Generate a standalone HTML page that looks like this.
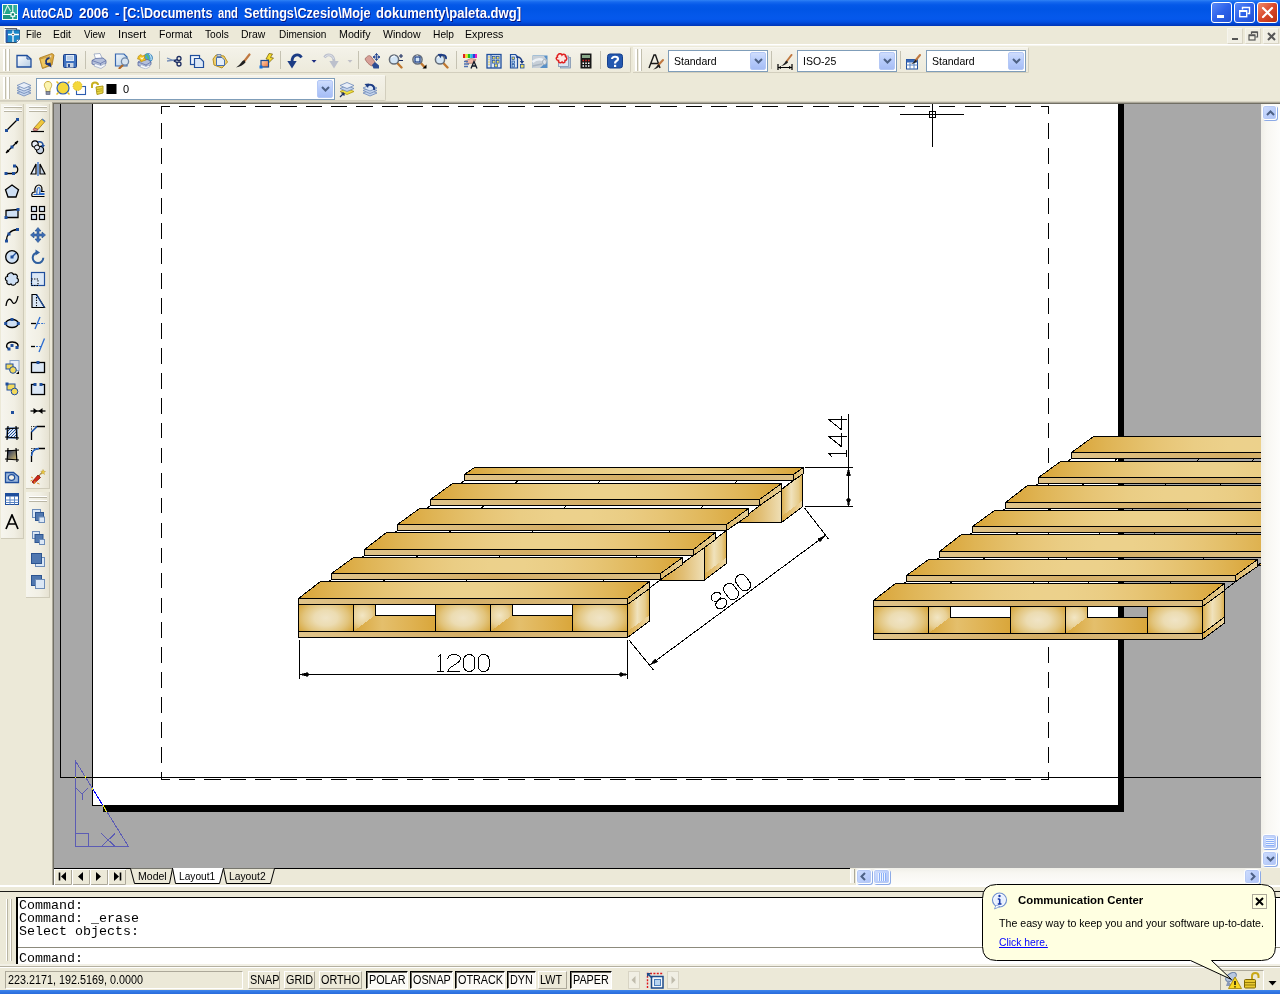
<!DOCTYPE html>
<html><head><meta charset="utf-8"><title>AutoCAD 2006</title>
<style>
*{box-sizing:border-box;margin:0;padding:0}
html,body{width:1280px;height:994px;overflow:hidden;background:#ece9d8;font-family:"Liberation Sans",sans-serif;font-size:11px;color:#000}
.abs{position:absolute}
#titlebar{position:absolute;left:0;top:0;width:1280px;height:26px;background:linear-gradient(to bottom,#2f82f5 0px,#1568ee 2px,#0458e8 5px,#0055e5 9px,#0458ea 15px,#0558ec 19px,#024fe0 22px,#0042cc 24px,#0035b5 26px)}
#titletext{position:absolute;left:22px;top:5px;color:#fff;font-weight:bold;font-size:14px;white-space:nowrap;letter-spacing:0px;text-shadow:1px 1px 0 #0a1883;transform-origin:0 0}
.capbtn{position:absolute;top:2px;width:21px;height:21px;border:1px solid #fff;border-radius:3px;background:linear-gradient(135deg,#5a8af8 0%,#2e62ea 50%,#2050d4 100%)}
.capbtn.close{background:linear-gradient(135deg,#ee8a6a 0%,#d9482a 50%,#b9300f 100%)}
#menubar{position:absolute;left:0;top:26px;width:1280px;height:19px;background:#ece9d8}
.mi{position:absolute;top:2px;font-size:11px;white-space:nowrap;transform-origin:0 0}
.mdibtn{position:absolute;top:28px;width:16px;height:16px;background:#f1efe4;border:1px solid #f6f5ee;border-right-color:#d8d4c4;border-bottom-color:#d8d4c4}
.tb{position:absolute;background:linear-gradient(to bottom,#f4f2e9 0%,#f0eee2 50%,#edeadb 100%);border-bottom:1px solid #d2cebd;border-right:1px solid #d2cebd;border-top:1px solid #f8f7f1;border-radius:0 2px 2px 0}
.grip{position:absolute;width:3px;background:#fff;border-right:1px solid #c2bfae}
.sep{position:absolute;width:1px;background:#c5c2b2}
.combo{position:absolute;height:22px;background:#fff;border:1px solid #7f9db9}
.combo span{position:absolute;left:5px;top:3.5px;font-size:11px;transform-origin:0 0;transform:scaleX(0.955)}
.cbtn{position:absolute;right:1px;top:1px;width:16px;height:18px;border-radius:2px;background:linear-gradient(to bottom,#cfddfd 0%,#b6cbfb 50%,#a6bdf5 100%);border:1px solid #b4c8f6}
.cbtn svg{position:absolute;left:3px;top:5px}
.ic{position:absolute}
.sbtn{position:absolute;width:16px;height:15px;border:1px solid #fff;border-radius:3px;background:linear-gradient(135deg,#cfddfd 0%,#bdd0fb 50%,#aec2f6 100%);box-shadow:inset 0 0 0 1px #b7caf5,1px 1px 0 #8caae6}
.sbtn svg{position:absolute;left:2.5px;top:3.5px}
.sunk{position:absolute;top:971px;height:18px;border:1px solid #aca899;border-right-color:#fff;border-bottom-color:#fff}
.sunk span,.sb span{position:absolute;top:1px;font-size:12px;white-space:nowrap;transform-origin:0 0;transform:scaleX(0.9)}
.sb{position:absolute;top:971px;height:18px}
.sb span{left:0.5px}
.sb.dn span{left:2px}
.sb.up{border:1px solid #fff;border-right-color:#aca899;border-bottom-color:#aca899}
.sb.dn{border:1px solid #000;border-right-color:#fff;border-bottom-color:#fff;background:#fbfaf6;box-shadow:inset 1px 1px 0 #6c6a60}
</style></head><body><div id="root" style="position:absolute;left:0;top:0;width:1280px;height:994px;will-change:transform">
<div id="titlebar">
<svg class="abs" style="left:2px;top:4px" width="16" height="16" viewBox="0 0 16 16"><rect x="0" y="0" width="16" height="16" fill="#f4fbf8"/><rect x="1" y="1" width="14" height="14" fill="#22a48c"/><rect x="1" y="11" width="9" height="4" fill="#1c9480"/><path d="M2 9.500L5.500 1.500L8.500 7" stroke="#d8f0e8" stroke-width="1.100" fill="none"/><path d="M1 10.500H15M10.800 1V15" stroke="#fff" stroke-width="1.100"/><rect x="9" y="8.600" width="3.700" height="3.700" fill="#22a48c" stroke="#fff" stroke-width="1.100"/><rect x="10.300" y="9.900" width="1.100" height="1.100" fill="#104838"/><rect x="12.500" y="1" width="2.500" height="8" fill="#35b49c"/></svg>
<div id="titletext"><span style="position:absolute;left:0.25px;top:0;transform-origin:0 0;transform:scaleX(0.8142)">AutoCAD</span><span style="position:absolute;left:57.00px;top:0;transform-origin:0 0;transform:scaleX(0.9551)">2006</span><span style="position:absolute;left:93.00px;top:0;transform-origin:0 0;transform:scaleX(0.9405)">-</span><span style="position:absolute;left:101.10px;top:0;transform-origin:0 0;transform:scaleX(0.8979)">[C:\Documents</span><span style="position:absolute;left:195.50px;top:0;transform-origin:0 0;transform:scaleX(0.8031)">and</span><span style="position:absolute;left:221.50px;top:0;transform-origin:0 0;transform:scaleX(0.9033)">Settings\Czesio\Moje</span><span style="position:absolute;left:354.00px;top:0;transform-origin:0 0;transform:scaleX(0.9320)">dokumenty\paleta.dwg]</span></div>
<div class="capbtn" style="left:1211px"><div class="abs" style="left:5px;top:12px;width:7px;height:3px;background:#fff"></div></div>
<div class="capbtn" style="left:1234px"><svg class="abs" style="left:3px;top:3px" width="13" height="13" viewBox="0 0 13 13"><path d="M4.5 3.5V1.5H11.5V7.5H9.5" stroke="#fff" stroke-width="1.4" fill="none"/><rect x="1.7" y="4.7" width="7" height="6" stroke="#fff" stroke-width="1.4" fill="none"/><path d="M1.7 5.2H8.7" stroke="#fff" stroke-width="1.6"/></svg></div>
<div class="capbtn close" style="left:1257px"><svg class="abs" style="left:3px;top:3px" width="13" height="13" viewBox="0 0 13 13"><path d="M2 2L11 11M11 2L2 11" stroke="#fff" stroke-width="2.2" stroke-linecap="round"/></svg></div>
</div>
<div id="menubar">
<svg class="abs" style="left:4px;top:1px" width="16" height="16" viewBox="0 0 16 16"><rect x="0" y="0" width="16" height="16" fill="#fdfdfb"/><path d="M0.700 1.500H12.500V12" stroke="#60646c" stroke-width="1.200" fill="#e8e8e8"/><path d="M2 3H15.500V12L12.500 15.500H2Z" fill="#1c88c8" stroke="#16508c" stroke-width="0.800"/><rect x="2" y="3" width="1.600" height="12.500" fill="#2c58b0"/><path d="M9 3.500V15M4 7.500H15" stroke="#fff" stroke-width="1.300"/><circle cx="9" cy="7.500" r="1.700" fill="#fff"/><circle cx="9" cy="7.500" r="0.700" fill="#000"/><path d="M12.500 15.500V12.500H15.500Z" fill="#fff" stroke="#16508c" stroke-width="0.500"/><path d="M2.500 15.800H12" stroke="#303848" stroke-width="0.800"/></svg>
<span class="mi" style="left:25.8px;transform:scaleX(0.876)">File</span><span class="mi" style="left:53.2px;transform:scaleX(0.947)">Edit</span><span class="mi" style="left:83.8px;transform:scaleX(0.897)">View</span><span class="mi" style="left:117.5px;transform:scaleX(1.027)">Insert</span><span class="mi" style="left:158.8px;transform:scaleX(0.955)">Format</span><span class="mi" style="left:205.0px;transform:scaleX(0.924)">Tools</span><span class="mi" style="left:241.2px;transform:scaleX(0.944)">Draw</span><span class="mi" style="left:278.5px;transform:scaleX(0.913)">Dimension</span><span class="mi" style="left:338.5px;transform:scaleX(0.972)">Modify</span><span class="mi" style="left:382.5px;transform:scaleX(0.959)">Window</span><span class="mi" style="left:432.5px;transform:scaleX(0.929)">Help</span><span class="mi" style="left:465.0px;transform:scaleX(0.967)">Express</span>
</div>
<div class="mdibtn" style="left:1227px"><div class="abs" style="left:4px;top:9px;width:6px;height:2px;background:#555"></div></div>
<div class="mdibtn" style="left:1245px"><svg class="abs" style="left:2px;top:2px" width="11" height="11" viewBox="0 0 11 11"><path d="M3.5 3V1H9.5V6H7.5" stroke="#555" stroke-width="1.2" fill="none"/><path d="M3.5 1.3H9.5" stroke="#555" stroke-width="1.6"/><rect x="1" y="4" width="6" height="5" stroke="#555" stroke-width="1.2" fill="none"/><path d="M1 4.4H7" stroke="#555" stroke-width="1.6"/></svg></div>
<div class="mdibtn" style="left:1263px"><svg class="abs" style="left:3px;top:3px" width="9" height="9" viewBox="0 0 9 9"><path d="M1 1L8 8M8 1L1 8" stroke="#555" stroke-width="2"/></svg></div>
<div class="abs" style="left:0;top:44px;width:1280px;height:1px;background:#fff"></div>
<div class="abs" style="left:0;top:45px;width:1280px;height:1px;background:#f6f5ee"></div>
<!-- toolbar row 1 : standard -->
<div class="tb" style="left:0px;top:47px;width:631px;height:26px"></div>
<div class="grip" style="left:3px;top:49px;height:22px"></div><div class="grip" style="left:7px;top:49px;height:22px"></div>
<div class="sep" style="left:85px;top:51px;height:18px"></div>
<div class="sep" style="left:159px;top:51px;height:18px"></div>
<div class="sep" style="left:280px;top:51px;height:18px"></div>
<div class="sep" style="left:358px;top:51px;height:18px"></div>
<div class="sep" style="left:456px;top:51px;height:18px"></div>
<div class="sep" style="left:600px;top:51px;height:18px"></div>
<svg class="ic" style="left:16px;top:53px" width="16" height="16" viewBox="0 0 16 16"><defs><linearGradient id="pg" x1="0" y1="0" x2="1" y2="1"><stop offset="0" stop-color="#fff"/><stop offset="1" stop-color="#b4cce4"/></linearGradient></defs><path d="M1 2.5H11L15 6V14H1Z" fill="url(#pg)" stroke="#1f4e9c" stroke-width="1.3"/><path d="M11 2.5V6H15" fill="none" stroke="#1f4e9c" stroke-width="1"/></svg>
<svg class="ic" style="left:39px;top:53px" width="16" height="16" viewBox="0 0 16 16"><path d="M0.5 5L13 0.5L15 2L13 12L3.5 15.5Z" fill="#e0aa3c" stroke="#a87820" stroke-width="0.8"/><path d="M3 5.5L12.5 2L11 11L4.5 13.5Z" fill="#fbfbf4" stroke="#c8a860" stroke-width="0.5"/><path d="M1 6L11 3.5L12.5 11.5L3.5 15Z" fill="#f0c860" stroke="#b88828" stroke-width="0.7"/><path d="M10.5 5C7 5.5 6 8.5 8 11.5" stroke="#1c3478" stroke-width="1.8" fill="none"/><path d="M5.5 10.5L12.5 14.5L11.5 9.5Z" fill="#1c3478"/></svg>
<svg class="ic" style="left:62px;top:53px" width="16" height="16" viewBox="0 0 16 16"><rect x="1.5" y="1.5" width="13" height="13" rx="1" fill="#3f72c0" stroke="#1c4088" stroke-width="1"/><rect x="4" y="2" width="8" height="6" fill="#dce8f6"/><path d="M5 4H11M5 6H11" stroke="#8aa8d0" stroke-width="0.8"/><rect x="4.5" y="10" width="7" height="4.5" fill="#c8d4e4"/><rect x="6" y="11" width="2" height="3" fill="#2c5098"/></svg>
<svg class="ic" style="left:91px;top:53px" width="16" height="16" viewBox="0 0 16 16"><path d="M3 1L9 0.5L11.5 6L5 7Z" fill="#fff" stroke="#8898b8" stroke-width="0.7"/><path d="M1 7.5L4.5 5.5L12 5L15 7.5L15 10.5L9.5 14L1 11Z" fill="#b4c0dc" stroke="#5868a0" stroke-width="0.8"/><path d="M1 7.5L9.5 10.5L15 7.5M9.5 10.5V14" stroke="#5868a0" stroke-width="0.7" fill="none"/><path d="M4 10.5L10 12.5L13.5 10.5L14.5 12.5L10 15.5L3 13Z" fill="#f4f6fa" stroke="#8898b8" stroke-width="0.6"/></svg>
<svg class="ic" style="left:114px;top:53px" width="16" height="16" viewBox="0 0 16 16"><defs><linearGradient id="pvg" x1="0" y1="0" x2="1" y2="1"><stop offset="0" stop-color="#f4f8fc"/><stop offset="1" stop-color="#b0cce4"/></linearGradient></defs><path d="M1.500 1H10L13 4V13H1.500Z" fill="url(#pvg)" stroke="#3868b0" stroke-width="1.200"/><path d="M10.500 10.500L5.500 15.200" stroke="#b06828" stroke-width="2.200" stroke-linecap="round"/><circle cx="11" cy="8.500" r="3.600" fill="#d8e4f0" stroke="#7088a8" stroke-width="1.300"/></svg>
<svg class="ic" style="left:137px;top:53px" width="16" height="16" viewBox="0 0 16 16"><circle cx="11" cy="5" r="4.500" fill="#48a0d8" stroke="#2870a8" stroke-width="0.600"/><path d="M9 1.500C11 3 12 6 11 9" stroke="#58c068" stroke-width="1.600" fill="none"/><path d="M12.500 1C14 3 14.500 5 14 7" stroke="#e8f4fc" stroke-width="1" fill="none"/><path d="M1 9L4.500 7L11 6.500L14 9V11.500L9 15L1 12.500Z" fill="#b4c0dc" stroke="#5868a0" stroke-width="0.800"/><path d="M1 9L9 12L14 9M9 12V15" stroke="#5868a0" stroke-width="0.700" fill="none"/><path d="M4 11.500L9 13.500L12 12L13 13.500L9 16L3 14Z" fill="#f4f6fa" stroke="#8898b8" stroke-width="0.500"/><path d="M1.500 3L4 1.500L5.500 3L8 2L7.500 5L9 7L6 8L4 9L3 6.500L0.500 6Z" fill="#f0c020" stroke="#b08810" stroke-width="0.600"/><path d="M3.500 4.500L5 6L6.500 4" stroke="#fff8d0" stroke-width="1.100" fill="none"/></svg>
<svg class="ic" style="left:166px;top:53px" width="16" height="16" viewBox="0 0 16 16"><path d="M1 5L12 9.5M1 8L12 6.5" stroke="#7890b8" stroke-width="1.3"/><circle cx="13" cy="5.5" r="2" fill="none" stroke="#1c2c60" stroke-width="1.3"/><circle cx="13" cy="11" r="2" fill="none" stroke="#1c2c60" stroke-width="1.3"/><path d="M8 7.8L11.5 6.5M8 8L11.5 10" stroke="#1c2c60" stroke-width="1.3"/></svg>
<svg class="ic" style="left:189px;top:53px" width="16" height="16" viewBox="0 0 16 16"><rect x="1.5" y="2.5" width="9" height="9" fill="#eef4fb" stroke="#1f4e9c" stroke-width="1.2"/><path d="M5.5 5.5H11.5L14.5 8.5V14.5H5.5Z" fill="#dce8f6" stroke="#1f4e9c" stroke-width="1.2"/></svg>
<svg class="ic" style="left:212px;top:53px" width="16" height="16" viewBox="0 0 16 16"><path d="M4 2L12 3L15.5 9L10 15L2 12L1 6Z" fill="#f0d070" stroke="#b89020" stroke-width="1"/><path d="M4.5 4.5H10L12.5 7V12.5H4.5Z" fill="#e4eefa" stroke="#4870b0" stroke-width="1"/><path d="M5 1.5H9V3.5H5Z" fill="#c8d0dc" stroke="#6078a0" stroke-width="0.8"/></svg>
<svg class="ic" style="left:235px;top:53px" width="16" height="16" viewBox="0 0 16 16"><path d="M14.5 1.5L9 8.5" stroke="#c07840" stroke-width="2.2" stroke-linecap="round"/><path d="M9.5 7L10.5 9.5C8 12 5 14 1 14.5C4 12.5 5.5 10.5 7.5 8Z" fill="#202020"/></svg>
<svg class="ic" style="left:258px;top:53px" width="16" height="16" viewBox="0 0 16 16"><defs><linearGradient id="beg" x1="0" y1="0" x2="1" y2="1"><stop offset="0" stop-color="#fcd8bc"/><stop offset="1" stop-color="#f07030"/></linearGradient></defs><path d="M11 0.500L14.500 1L12.500 4.500L15.500 5L9 11.500L10.500 6.500L8 6Z" fill="#f4dc30" stroke="#705800" stroke-width="0.700"/><rect x="3" y="7.500" width="7.500" height="6.500" fill="url(#beg)" stroke="#1c4a90" stroke-width="1.200"/><rect x="1.5" y="12.5" width="3" height="3" fill="#1070e0"/></svg>
<svg class="ic" style="left:287px;top:53px" width="16" height="16" viewBox="0 0 16 16"><path d="M14.500 4.500C12 0.500 5 0.800 5 9" stroke="#1c3c84" stroke-width="2.800" fill="none"/><path d="M0.300 8L9.700 8L5 15.500Z" fill="#1c3c84"/></svg>
<svg class="ic" style="left:306px;top:53px" width="16" height="16" viewBox="0 0 16 16"><path d="M5.5 7H10.5L8 9.8Z" fill="#1c2c80"/></svg>
<svg class="ic" style="left:323px;top:53px" width="16" height="16" viewBox="0 0 16 16"><path d="M1.500 4.500C4 0.500 11 0.800 11 9" stroke="#bcc0cc" stroke-width="2.800" fill="none"/><path d="M6.300 8L15.700 8L11 15.500Z" fill="#bcc0cc"/><path d="M2 4C4.500 1 9.500 1.200 10.500 6" stroke="#e4e6ec" stroke-width="0.900" fill="none"/></svg>
<svg class="ic" style="left:342px;top:53px" width="16" height="16" viewBox="0 0 16 16"><path d="M5.5 7H10.5L8 9.8Z" fill="#c0c0c8"/></svg>
<svg class="ic" style="left:364px;top:53px" width="16" height="16" viewBox="0 0 16 16"><path d="M1 6C3 3 5 2 6.5 3L11 9L8 13C5 12 2.5 9 1 6Z" fill="#d8a098" stroke="#a06860" stroke-width="0.8"/><path d="M8 12L11 9L15 12.5V15.5H9.5Z" fill="#2c4c94"/><path d="M12.5 0.5V7.5M9 4H16M12.5 0.5L11.3 2H13.7ZM12.5 7.5L11.3 6H13.7ZM9 4L10.5 2.8V5.2ZM16 4L14.5 2.8V5.2Z" stroke="#2c4c94" stroke-width="0.9" fill="#2c4c94"/></svg>
<svg class="ic" style="left:388px;top:53px" width="16" height="16" viewBox="0 0 16 16"><path d="M8.8 9.5L13.5 14.5" stroke="#c07830" stroke-width="2.4" stroke-linecap="round"/><circle cx="6" cy="6.5" r="4.6" fill="#d4e6f6" stroke="#646c78" stroke-width="1.5"/><path d="M3.500 5C4 3.500 5.500 2.800 7 3" stroke="#fff" stroke-width="1" fill="none"/><path d="M11 3H15M13 1V5M11 7.5H15" stroke="#1c2c60" stroke-width="1.1"/></svg>
<svg class="ic" style="left:411px;top:53px" width="16" height="16" viewBox="0 0 16 16"><path d="M9.3 9.5L13 13.5" stroke="#c07830" stroke-width="2.4" stroke-linecap="round"/><circle cx="6.5" cy="6.5" r="4.6" fill="#d4e6f6" stroke="#646c78" stroke-width="1.5"/><path d="M3.500 5C4 3.500 5.500 2.800 7 3" stroke="#fff" stroke-width="1" fill="none"/><rect x="4" y="4" width="5" height="5" fill="none" stroke="#1c3c84" stroke-width="1.2"/><path d="M15.5 11.5V15.5H11.5Z" fill="#000"/></svg>
<svg class="ic" style="left:434px;top:53px" width="16" height="16" viewBox="0 0 16 16"><path d="M8.8 9.5L13.5 14.5" stroke="#c07830" stroke-width="2.4" stroke-linecap="round"/><circle cx="6" cy="6.5" r="4.6" fill="#d4e6f6" stroke="#646c78" stroke-width="1.5"/><path d="M3.500 5C4 3.500 5.500 2.800 7 3" stroke="#fff" stroke-width="1" fill="none"/><path d="M12 6C12.5 2.5 9 1 6.5 2.5" stroke="#1c3c84" stroke-width="1.8" fill="none"/><path d="M3.5 1L8 0.8L6.8 5.2Z" fill="#1c3c84"/></svg>
<svg class="ic" style="left:462px;top:53px" width="16" height="16" viewBox="0 0 16 16"><rect x="1" y="1" width="2.4" height="4" fill="#e02020"/><rect x="3.4" y="1" width="2.4" height="4" fill="#f0e020"/><rect x="5.8" y="1" width="2.4" height="4" fill="#20c020"/><rect x="8.2" y="1" width="2.4" height="4" fill="#20c0e0"/><rect x="10.6" y="1" width="2.4" height="4" fill="#2040e0"/><rect x="13" y="1" width="2" height="4" fill="#e020c0"/><path d="M3 8L9 5.5L14 6.5L12 10L6 10.5Z" fill="#f0b8a8" stroke="#b07868" stroke-width="0.7"/><path d="M2 8.5H6M2 11H7M2 13.5H6" stroke="#5070b0" stroke-width="1.5"/><path d="M9 15.5L12 8.5L15 15.5M10 13H14" stroke="#101828" stroke-width="1.3" fill="none"/></svg>
<svg class="ic" style="left:486px;top:53px" width="16" height="16" viewBox="0 0 16 16"><rect x="1" y="1.5" width="14" height="13.5" fill="#dce8f6" stroke="#1f4e9c" stroke-width="1.3"/><path d="M5 1.5V15" stroke="#1f4e9c" stroke-width="1"/><path d="M2.5 4H3.5M2.5 6.5H3.5M2.5 9H3.5M2.5 11.5H3.5" stroke="#e8c020" stroke-width="1.6"/><rect x="6.5" y="3.5" width="2.6" height="2.6" fill="#f0e060" stroke="#1f4e9c" stroke-width="0.7"/><rect x="10.5" y="3.5" width="2.6" height="2.6" fill="#f0e060" stroke="#1f4e9c" stroke-width="0.7"/><rect x="6.5" y="7.5" width="2.6" height="2.6" fill="#f0e060" stroke="#1f4e9c" stroke-width="0.7"/><rect x="10.5" y="7.5" width="2.6" height="2.6" fill="#f0e060" stroke="#1f4e9c" stroke-width="0.7"/><rect x="8.5" y="11" width="3" height="3" fill="#f0e060" stroke="#1f4e9c" stroke-width="0.7"/></svg>
<svg class="ic" style="left:509px;top:53px" width="16" height="16" viewBox="0 0 16 16"><path d="M1.5 1.5H6.5L8.5 3.5V15H1.5Z" fill="#dce8f6" stroke="#1f4e9c" stroke-width="1.2"/><rect x="3" y="4" width="2.6" height="2.6" fill="#f0e060" stroke="#1f4e9c" stroke-width="0.7"/><rect x="3" y="8" width="2.6" height="2.6" fill="#a8d0f0" stroke="#1f4e9c" stroke-width="0.7"/><rect x="3" y="11.5" width="2.6" height="2.6" fill="#a8d0f0" stroke="#1f4e9c" stroke-width="0.7"/><path d="M7 4C11 3.5 13 6 13 9" stroke="#1c3c84" stroke-width="1.5" fill="none"/><path d="M10.8 8L15.2 8L13 11Z" fill="#1c3c84"/><rect x="11.5" y="11.5" width="3.5" height="3.5" fill="#f0e060" stroke="#1f4e9c" stroke-width="0.8"/></svg>
<svg class="ic" style="left:532px;top:53px" width="16" height="16" viewBox="0 0 16 16"><rect x="0.5" y="2.5" width="15" height="12.5" fill="#5890c8"/><path d="M0.5 3L12 3L15.5 8L8 15H0.5Z" fill="#c8d0d8"/><path d="M0.5 9C4 6 8 5.5 12 7.5" stroke="#eef2f6" stroke-width="2.5" fill="none"/><ellipse cx="12.5" cy="9" rx="2" ry="2.6" fill="#dfe4ea" stroke="#98a4b0" stroke-width="0.8"/><path d="M0.5 13L10 11" stroke="#a8b4c0" stroke-width="1.5"/></svg>
<svg class="ic" style="left:555px;top:53px" width="16" height="16" viewBox="0 0 16 16"><rect x="5.5" y="4.5" width="10" height="10.5" fill="#b8c8dc" stroke="#8094b0" stroke-width="0.8"/><rect x="3.5" y="3" width="10" height="10.5" fill="#dce6f2" stroke="#8094b0" stroke-width="0.8"/><path d="M3 2C4 0 6.5 0.5 7 2C8.5 0.5 11 1.5 10.5 3.5C12.5 4.5 12 7.5 10 7.5C10.5 9.5 8 10.5 7 9C5.5 10.5 3 9.5 3.5 7.5C1 7.5 0.5 4.5 2.5 4C2 3 2.3 2.3 3 2Z" fill="#fbe8e4" stroke="#e02020" stroke-width="1.5"/></svg>
<svg class="ic" style="left:578px;top:53px" width="16" height="16" viewBox="0 0 16 16"><rect x="2.5" y="0.5" width="11" height="15" fill="#181818"/><rect x="4" y="2" width="8" height="3" fill="#88a888"/><path d="M4.5 7.5H6M7.3 7.5H8.8M10 7.5H11.5" stroke="#e02020" stroke-width="1.6"/><path d="M4.5 10.3H6M7.3 10.3H8.8M10 10.3H11.5M4.5 13H6M7.3 13H8.8M10 13H11.5" stroke="#fff" stroke-width="1.6"/></svg>
<svg class="ic" style="left:607px;top:53px" width="16" height="16" viewBox="0 0 16 16"><rect x="0.5" y="1" width="15" height="14" rx="2.5" fill="#2458b0" stroke="#16408c" stroke-width="1"/><path d="M5 6C5 3 11 3 11 6C11 8 8 8 8 10.5" stroke="#fff" stroke-width="2.2" fill="none"/><rect x="7" y="11.8" width="2.2" height="2.2" fill="#fff"/></svg>

<!-- styles toolbar -->
<div class="tb" style="left:633px;top:47px;width:396px;height:26px"></div>
<div class="grip" style="left:635px;top:49px;height:22px"></div><div class="grip" style="left:639px;top:49px;height:22px"></div>
<div class="combo" style="left:668px;top:50px;width:100px"><span>Standard</span><div class="cbtn"><svg width="9" height="6" viewBox="0 0 9 6"><path d="M1 1L4.5 4.5L8 1" stroke="#4d6185" stroke-width="2" fill="none"/></svg></div></div>
<div class="sep" style="left:771px;top:51px;height:18px"></div>
<div class="combo" style="left:797px;top:50px;width:100px"><span>ISO-25</span><div class="cbtn"><svg width="9" height="6" viewBox="0 0 9 6"><path d="M1 1L4.5 4.5L8 1" stroke="#4d6185" stroke-width="2" fill="none"/></svg></div></div>
<div class="sep" style="left:900px;top:51px;height:18px"></div>
<div class="combo" style="left:926px;top:50px;width:100px"><span>Standard</span><div class="cbtn"><svg width="9" height="6" viewBox="0 0 9 6"><path d="M1 1L4.5 4.5L8 1" stroke="#4d6185" stroke-width="2" fill="none"/></svg></div></div>
<svg class="ic" style="left:648px;top:54px" width="16" height="16" viewBox="0 0 16 16"><path d="M1 14L6 1H7.5L12 14M3 9.5H10" stroke="#181818" stroke-width="1.4" fill="none"/><path d="M15 6L10.5 11" stroke="#c07840" stroke-width="2" stroke-linecap="round"/><path d="M11 10L11.8 12C10 14 8 15 5 15.5C7.5 14 8.5 12.5 9.5 11Z" fill="#202020"/></svg>
<svg class="ic" style="left:777px;top:54px" width="16" height="16" viewBox="0 0 16 16"><path d="M14.5 1L9.5 7.5" stroke="#c07840" stroke-width="2" stroke-linecap="round"/><path d="M10 6.5L11 8.5C9 10.5 7 11.5 4 12C6.5 10.5 7.5 9 8.5 7.5Z" fill="#202020"/><path d="M1 10V16M15 10V16M1 13.5H15" stroke="#000" stroke-width="1.2"/><path d="M1 13.5L4 12V15ZM15 13.5L12 12V15Z" fill="#000"/></svg>
<svg class="ic" style="left:905px;top:54px" width="16" height="16" viewBox="0 0 16 16"><rect x="1.5" y="5.5" width="11" height="9.5" fill="#fff" stroke="#1f4e9c" stroke-width="1"/><rect x="1.5" y="5.5" width="11" height="3" fill="#3868b8"/><path d="M1.5 11H12.5M5 8.5V15M9 8.5V15" stroke="#5c86c4" stroke-width="1"/><path d="M15 1L10.5 6.5" stroke="#c07840" stroke-width="2" stroke-linecap="round"/><path d="M11 5.5L11.8 7.5C10 9 8.5 9.8 6 10C8 9 9 7.8 9.8 6.5Z" fill="#202020"/></svg>

<!-- toolbar row 2 : layers -->
<div class="tb" style="left:0px;top:75px;width:386px;height:26px"></div>
<div class="grip" style="left:3px;top:77px;height:22px"></div><div class="grip" style="left:7px;top:77px;height:22px"></div>
<div class="combo" style="left:36px;top:78px;width:299px"><span style="left:86px;transform:none">0</span><div class="cbtn"><svg width="9" height="6" viewBox="0 0 9 6"><path d="M1 1L4.5 4.5L8 1" stroke="#4d6185" stroke-width="2" fill="none"/></svg></div></div>
<svg class="ic" style="left:16px;top:82px" width="16" height="16" viewBox="0 0 16 16"><path d="M8 8 L15 11 L8 14 L1 11 Z" fill="#c4d4ec" stroke="#6c88b8" stroke-width="0.8"/><path d="M8 5.5 L15 8.5 L8 11.5 L1 8.5 Z" fill="#c4d4ec" stroke="#6c88b8" stroke-width="0.8"/><path d="M8 3 L15 6 L8 9 L1 6 Z" fill="#dce6f4" stroke="#6c88b8" stroke-width="0.8"/><path d="M8 0.5 L15 3.5 L8 6.5 L1 3.5 Z" fill="#e8eef8" stroke="#6c88b8" stroke-width="0.8"/></svg>
<svg class="ic" style="left:40px;top:80px" width="16" height="16" viewBox="0 0 16 16"><path d="M8 1.5C4.5 1.5 3.5 5 5 7.5C6 9 6 10 6 11.5H10C10 10 10 9 11 7.5C12.5 5 11.5 1.5 8 1.5Z" fill="#fbf4b0" stroke="#c8a838" stroke-width="1"/><rect x="6" y="11.5" width="4" height="3" fill="#8890a8" stroke="#505870" stroke-width="0.6"/></svg>
<svg class="ic" style="left:55px;top:80px" width="16" height="16" viewBox="0 0 16 16"><circle cx="8" cy="8" r="6" fill="#f4d83c" stroke="#2c5cb0" stroke-width="1.2"/><path d="M1.5 1.5L3.5 3.5M14.5 1.5L12.5 3.5M1.5 14.5L3.5 12.5M14.5 14.5L12.5 12.5" stroke="#e8c020" stroke-width="1.5"/></svg>
<svg class="ic" style="left:71px;top:80px" width="16" height="16" viewBox="0 0 16 16"><rect x="5.5" y="6.5" width="9" height="8" fill="#fff" stroke="#2c5cb0" stroke-width="1.1"/><circle cx="6.5" cy="6" r="4.5" fill="#f4d83c" stroke="#e0b820" stroke-width="1" stroke-dasharray="1.5 1"/></svg>
<svg class="ic" style="left:89px;top:80px" width="16" height="16" viewBox="0 0 16 16"><path d="M3 8V5C3 1.5 9 1.5 9 5" stroke="#c8b020" stroke-width="2" fill="none"/><path d="M7 7L14 6V13L8 14.5Z" fill="#e8d848" stroke="#a89010" stroke-width="0.9"/><path d="M8 9.5L13 8.8M8 11.5L13 10.8" stroke="#a89010" stroke-width="0.7"/></svg>
<svg class="ic" style="left:103px;top:80px" width="16" height="16" viewBox="0 0 16 16"><rect x="3.5" y="4" width="10" height="10" fill="#000"/></svg>
<svg class="ic" style="left:339px;top:82px" width="16" height="16" viewBox="0 0 16 16"><path d="M8 6.5 L15 9.5 L8 12.5 L1 9.5 Z" fill="#f0e040" stroke="#b09810" stroke-width="0.8"/><path d="M8 3.5 L15 6.5 L8 9.5 L1 6.5 Z" fill="#c4d4ec" stroke="#6c88b8" stroke-width="0.8"/><path d="M8 0.5 L15 3.5 L8 6.5 L1 3.5 Z" fill="#e8eef8" stroke="#6c88b8" stroke-width="0.8"/><path d="M1 15L5 11M5 11H2.2M5 11V13.8" stroke="#1c2c60" stroke-width="1.2" fill="none"/></svg>
<svg class="ic" style="left:362px;top:82px" width="16" height="16" viewBox="0 0 16 16"><path d="M8 8 L15 11 L8 14 L1 11 Z" fill="#c4d4ec" stroke="#6c88b8" stroke-width="0.8"/><path d="M8 5.5 L15 8.5 L8 11.5 L1 8.5 Z" fill="#c4d4ec" stroke="#6c88b8" stroke-width="0.8"/><path d="M8 3 L15 6 L8 9 L1 6 Z" fill="#dce6f4" stroke="#6c88b8" stroke-width="0.8"/><path d="M12 8C13 3 8 1.5 5.5 3.5" stroke="#1c3c84" stroke-width="1.8" fill="none"/><path d="M2.5 2L7 1.5L6 6Z" fill="#1c3c84"/></svg>

<div class="abs" style="left:0;top:101px;width:1280px;height:1px;background:#d8d4c4"></div>
<!-- left toolbars -->
<div class="abs" style="left:0;top:102px;width:53px;height:790px;background:#ece9d8"></div>
<div class="abs" style="left:1px;top:104px;width:23px;height:435px;background:linear-gradient(to right,#f6f5ee 0%,#f1efe4 60%,#e6e2d2 100%);border-right:1px solid #cfcbb9;border-bottom:1px solid #cfcbb9"></div>
<div class="abs" style="left:26px;top:104px;width:24px;height:385px;background:linear-gradient(to right,#f6f5ee 0%,#f1efe4 60%,#e6e2d2 100%);border-right:1px solid #cfcbb9;border-bottom:1px solid #cfcbb9"></div>
<div class="abs" style="left:26px;top:492px;width:24px;height:106px;background:linear-gradient(to right,#f6f5ee 0%,#f1efe4 60%,#e6e2d2 100%);border-right:1px solid #cfcbb9;border-bottom:1px solid #cfcbb9"></div>
<svg class="ic" style="left:4px;top:117px" width="16" height="16" viewBox="0 0 16 16"><path d="M2.5 13.5L13.5 2.5" stroke="#000" stroke-width="1.3" fill="none"/><rect x="1.0" y="12.0" width="3" height="3" fill="#1f4e9c"/><rect x="12.0" y="1.0" width="3" height="3" fill="#1f4e9c"/></svg>
<svg class="ic" style="left:4px;top:139px" width="16" height="16" viewBox="0 0 16 16"><path d="M2 14L14 2" stroke="#000" stroke-width="1.3" fill="none"/><path d="M14 2L10.5 3.2L12.8 5.5ZM2 14L5.5 12.8L3.2 10.5Z" fill="#000"/><rect x="6.5" y="6.5" width="3" height="3" fill="#1f4e9c"/></svg>
<svg class="ic" style="left:4px;top:161px" width="16" height="16" viewBox="0 0 16 16"><path d="M2 12.5H9.5C15 12.5 15 5 10.5 5" stroke="#000" stroke-width="1.3" fill="none"/><rect x="0.5" y="11.0" width="3" height="3" fill="#1f4e9c"/><rect x="8.0" y="11.0" width="3" height="3" fill="#1f4e9c"/><rect x="9.0" y="3.5" width="3" height="3" fill="#1f4e9c"/></svg>
<svg class="ic" style="left:4px;top:183px" width="16" height="16" viewBox="0 0 16 16"><path d="M8 2L14.5 6.8L12 14H4L1.5 6.8Z" stroke="#000" stroke-width="1.3" fill="#cfe0f4"/></svg>
<svg class="ic" style="left:4px;top:205px" width="16" height="16" viewBox="0 0 16 16"><path d="M2 5.5L14 4.5V12.5H2Z" stroke="#000" stroke-width="1.3" fill="#cfe0f4"/><rect x="0.5" y="11.0" width="3" height="3" fill="#1f4e9c"/><rect x="12.5" y="3.0" width="3" height="3" fill="#1f4e9c"/></svg>
<svg class="ic" style="left:4px;top:227px" width="16" height="16" viewBox="0 0 16 16"><path d="M2.5 14C2.5 7 7 3 13.5 2.5" stroke="#000" stroke-width="1.3" fill="none"/><rect x="1.0" y="12.5" width="3" height="3" fill="#1f4e9c"/><rect x="12.0" y="1.0" width="3" height="3" fill="#1f4e9c"/><rect x="3.5" y="5.5" width="3" height="3" fill="#1f4e9c"/></svg>
<svg class="ic" style="left:4px;top:249px" width="16" height="16" viewBox="0 0 16 16"><circle cx="8" cy="8" r="6.3" stroke="#000" stroke-width="1.3" fill="#cfe0f4"/><path d="M8 8L12 4" stroke="#1f4e9c" stroke-width="1.3"/><rect x="6.5" y="6.5" width="3" height="3" fill="#1f4e9c"/></svg>
<svg class="ic" style="left:4px;top:271px" width="16" height="16" viewBox="0 0 16 16"><path d="M5 2.5C7 1 9 2 9.5 3.5C12 2.5 14.5 4.5 13 7C15.5 8.5 14.5 12 12 12C11.5 14.5 8 15 7 13C4.5 14.5 2 12.5 3 10C0.5 9 1 5.5 3.5 5.5C3 4 3.8 3 5 2.5Z" stroke="#000" stroke-width="1.2" fill="#cfe0f4"/></svg>
<svg class="ic" style="left:4px;top:293px" width="16" height="16" viewBox="0 0 16 16"><path d="M2 13C3 5 6.5 5 8 8.5C9.5 12 12.5 11 14 3" stroke="#000" stroke-width="1.3" fill="none"/></svg>
<svg class="ic" style="left:4px;top:315px" width="16" height="16" viewBox="0 0 16 16"><ellipse cx="8" cy="8.5" rx="6.3" ry="4" stroke="#000" stroke-width="1.3" fill="#cfe0f4"/><rect x="0.19999999999999996" y="7.0" width="3" height="3" fill="#1f4e9c"/><rect x="12.8" y="7.0" width="3" height="3" fill="#1f4e9c"/><rect x="6.5" y="3.0" width="3" height="3" fill="#1f4e9c"/></svg>
<svg class="ic" style="left:4px;top:337px" width="16" height="16" viewBox="0 0 16 16"><path d="M5 12C1 10 2 5.5 8 5C13 4.8 15.5 8 13 10.5" stroke="#000" stroke-width="1.3" fill="none"/><rect x="3.5" y="10.5" width="3" height="3" fill="#1f4e9c"/><rect x="11.5" y="9.0" width="3" height="3" fill="#1f4e9c"/><rect x="6.5" y="7.0" width="3" height="3" fill="#1f4e9c"/></svg>
<svg class="ic" style="left:4px;top:359px" width="16" height="16" viewBox="0 0 16 16"><rect x="6" y="1.5" width="9" height="10" fill="#e8eef6" stroke="#8aa4c8" stroke-width="1"/><rect x="2" y="5" width="7" height="5" fill="#f2d95c" stroke="#1f4e9c" stroke-width="1"/><circle cx="9" cy="11" r="3.3" fill="#f2d95c" stroke="#1f4e9c" stroke-width="1"/><path d="M15 12V15H12Z" fill="#000"/></svg>
<svg class="ic" style="left:4px;top:381px" width="16" height="16" viewBox="0 0 16 16"><rect x="3" y="3" width="8" height="6" fill="#f2d95c" stroke="#1f4e9c" stroke-width="1"/><circle cx="10.5" cy="10.5" r="3.3" fill="#f2d95c" stroke="#1f4e9c" stroke-width="1"/><rect x="1.5" y="1.5" width="3" height="3" fill="#1f4e9c"/></svg>
<svg class="ic" style="left:4px;top:403px" width="16" height="16" viewBox="0 0 16 16"><rect x="7.0" y="8.0" width="3" height="3" fill="#1f4e9c"/></svg>
<svg class="ic" style="left:4px;top:425px" width="16" height="16" viewBox="0 0 16 16"><rect x="3" y="3" width="10" height="10" fill="#dbe7f5" stroke="#1f4e9c" stroke-width="1"/><path d="M3 7L7 3M3 10L10 3M3 13L13 3M6 13L13 6M9 13L13 9" stroke="#1f4e9c" stroke-width="1"/><path d="M1 4L15 3M1 12L15 13M4 1L3 15M12 1L13 15" stroke="#000" stroke-width="1.2"/></svg>
<svg class="ic" style="left:4px;top:447px" width="16" height="16" viewBox="0 0 16 16"><defs><linearGradient id="gi1" x1="0" y1="0" x2="1" y2="1"><stop offset="0" stop-color="#1a2a5a"/><stop offset="1" stop-color="#d8c070"/></linearGradient></defs><rect x="3" y="3" width="10" height="10" fill="url(#gi1)"/><path d="M1 4L15 3M1 12L15 13M4 1L3 15M12 1L13 15" stroke="#000" stroke-width="1.2"/></svg>
<svg class="ic" style="left:4px;top:469px" width="16" height="16" viewBox="0 0 16 16"><path d="M1.5 3.5H9.5L14.5 7.5V13.5H1.5Z" fill="#9cb8dc" stroke="#1f4e9c" stroke-width="1.3"/><ellipse cx="7.5" cy="8.5" rx="3.2" ry="2.8" fill="#f4f2e8" stroke="#1f4e9c" stroke-width="1.2"/></svg>
<svg class="ic" style="left:4px;top:491px" width="16" height="16" viewBox="0 0 16 16"><rect x="1.5" y="2.5" width="13" height="11" fill="#fff" stroke="#1f4e9c" stroke-width="1"/><rect x="1.5" y="2.5" width="13" height="3" fill="#1f4e9c"/><path d="M1.5 9H14.5M1.5 11.5H14.5M6 5V13.5M10.5 5V13.5" stroke="#5c86c4" stroke-width="1"/></svg>
<svg class="ic" style="left:4px;top:514px" width="16" height="16" viewBox="0 0 16 16"><path d="M2 15L8 1L14 15M4.2 10H11.8" stroke="#000" stroke-width="1.7" fill="none"/></svg>
<svg class="ic" style="left:30px;top:117px" width="16" height="16" viewBox="0 0 16 16"><path d="M4 11L12 2L15 4.5L8 12.5Z" fill="#f0c83c" stroke="#a07820" stroke-width="0.8"/><path d="M4 11L8 12.5L6.5 14L3 13Z" fill="#e89090" stroke="#a05050" stroke-width="0.8"/><path d="M12 2L15 4.5" stroke="#5080c0" stroke-width="1.5"/><path d="M1 14.5H14" stroke="#000" stroke-width="1.2"/></svg>
<svg class="ic" style="left:30px;top:139px" width="16" height="16" viewBox="0 0 16 16"><circle cx="5" cy="5" r="3.2" fill="#e8eef6" stroke="#000" stroke-width="1.2"/><circle cx="10" cy="11" r="3.6" fill="#c8d4e4" stroke="#000" stroke-width="1.2"/><circle cx="7" cy="8.5" r="2.5" fill="#e8eef6" stroke="#000" stroke-width="1"/><path d="M8 3C11 2 13 4 13 6" stroke="#1f4e9c" stroke-width="1.6" fill="none"/><path d="M10.8 6L15 6L13 9Z" fill="#1f4e9c"/></svg>
<svg class="ic" style="left:30px;top:161px" width="16" height="16" viewBox="0 0 16 16"><path d="M6 3V13H1Z" fill="#e8eef6" stroke="#000" stroke-width="1.2"/><path d="M10 3V13H15Z" fill="#c8d4e4" stroke="#000" stroke-width="1.2"/><path d="M8 1V15" stroke="#2c6cd0" stroke-width="1.3"/></svg>
<svg class="ic" style="left:30px;top:183px" width="16" height="16" viewBox="0 0 16 16"><path d="M2 13.5H14.5M2 13.5C1 10 3 9 5 9C4 4 7 2 9 2C12 2 12.5 6 11.5 8.5H14.5" stroke="#000" stroke-width="1.2" fill="none"/><path d="M3.5 11.5H14.5M7 11.5C6.5 7 7.5 4.5 9 4.5C10.3 4.5 10.3 8 9.5 10.5H14.5" stroke="#2c6cd0" stroke-width="1.2" fill="none"/></svg>
<svg class="ic" style="left:30px;top:205px" width="16" height="16" viewBox="0 0 16 16"><rect x="1.5" y="1.5" width="5" height="5" fill="#dbe7f5" stroke="#000" stroke-width="1.2"/><rect x="9.5" y="1.5" width="5" height="5" fill="#dbe7f5" stroke="#000" stroke-width="1.2"/><rect x="1.5" y="9.5" width="5" height="5" fill="#dbe7f5" stroke="#000" stroke-width="1.2"/><rect x="9.5" y="9.5" width="5" height="5" fill="#dbe7f5" stroke="#000" stroke-width="1.2"/></svg>
<svg class="ic" style="left:30px;top:227px" width="16" height="16" viewBox="0 0 16 16"><path d="M8 0.5L11 4H9V7H12V5L15.5 8L12 11V9H9V12H11L8 15.5L5 12H7V9H4V11L0.5 8L4 5V7H7V4H5Z" fill="#3c6cb4" stroke="#27508c" stroke-width="0.6"/></svg>
<svg class="ic" style="left:30px;top:249px" width="16" height="16" viewBox="0 0 16 16"><path d="M8 3.5A5.3 5.3 0 1 0 13.3 8.8" stroke="#2f5f9f" stroke-width="2" fill="none"/><path d="M5.5 0.5L10 3.5L5.5 6.5Z" fill="#2f5f9f"/></svg>
<svg class="ic" style="left:30px;top:271px" width="16" height="16" viewBox="0 0 16 16"><rect x="1.5" y="1.5" width="13" height="13" fill="#dbe7f5" stroke="#1f4e9c" stroke-width="1.2"/><rect x="1.5" y="8" width="6.5" height="6.5" fill="none" stroke="#000" stroke-width="1.1" stroke-dasharray="1.3 1.3"/></svg>
<svg class="ic" style="left:30px;top:293px" width="16" height="16" viewBox="0 0 16 16"><path d="M2 1.5H6.5L14.5 14.5H2Z" fill="#dbe7f5" stroke="#000" stroke-width="1.2"/><path d="M6.5 1.5V14.5" stroke="#000" stroke-width="1.1" stroke-dasharray="1.3 1.3"/><path d="M6.5 1.5L14.5 14.5" stroke="#1f4e9c" stroke-width="1.3"/></svg>
<svg class="ic" style="left:30px;top:315px" width="16" height="16" viewBox="0 0 16 16"><path d="M1 8.5H6" stroke="#000" stroke-width="1.3"/><path d="M8 8.5H15" stroke="#2c6cd0" stroke-width="1.2" stroke-dasharray="2 1.2"/><path d="M5 14L10 2" stroke="#2c6cd0" stroke-width="1.3"/></svg>
<svg class="ic" style="left:30px;top:337px" width="16" height="16" viewBox="0 0 16 16"><path d="M1 9.5H5" stroke="#000" stroke-width="1.3"/><path d="M6 9.5H11" stroke="#2c6cd0" stroke-width="1.2" stroke-dasharray="2 1.2"/><path d="M9 15L14.5 1.5" stroke="#2c6cd0" stroke-width="1.3"/></svg>
<svg class="ic" style="left:30px;top:359px" width="16" height="16" viewBox="0 0 16 16"><rect x="1.5" y="3.5" width="13" height="10" fill="#dbe7f5" stroke="#000" stroke-width="1.3"/><rect x="6.5" y="2.0" width="3" height="3" fill="#1f4e9c"/></svg>
<svg class="ic" style="left:30px;top:381px" width="16" height="16" viewBox="0 0 16 16"><rect x="1.5" y="3.5" width="13" height="10" fill="#dbe7f5" stroke="#000" stroke-width="1.3"/><rect x="5.5" y="2" width="5" height="3" fill="#f1efe4"/><rect x="3.5" y="2.0" width="3" height="3" fill="#1f4e9c"/><rect x="9.5" y="2.0" width="3" height="3" fill="#1f4e9c"/></svg>
<svg class="ic" style="left:30px;top:403px" width="16" height="16" viewBox="0 0 16 16"><path d="M0.5 8H15.5" stroke="#000" stroke-width="1.3"/><path d="M3.5 5L7.5 8L3.5 11ZM12.5 5L8.5 8L12.5 11Z" fill="#000"/></svg>
<svg class="ic" style="left:30px;top:425px" width="16" height="16" viewBox="0 0 16 16"><path d="M1.5 15V7L7 1.5H15" stroke="#000" stroke-width="1.3" fill="none"/><path d="M1.5 7V1.5H7" stroke="#000" stroke-width="1" stroke-dasharray="1.2 1.2" fill="none"/><path d="M1.5 7L7 1.5" stroke="#2c6cd0" stroke-width="1.3"/></svg>
<svg class="ic" style="left:30px;top:447px" width="16" height="16" viewBox="0 0 16 16"><path d="M1.5 15V9C1.5 4 5 1.5 9 1.5H15" stroke="#000" stroke-width="1.3" fill="none"/><path d="M1.5 9V1.5H9" stroke="#000" stroke-width="1" stroke-dasharray="1.2 1.2" fill="none"/><path d="M1.5 9C1.5 4 5 1.5 9 1.5" stroke="#2c6cd0" stroke-width="1.4" fill="none"/></svg>
<svg class="ic" style="left:30px;top:469px" width="16" height="16" viewBox="0 0 16 16"><path d="M2 13L8 6L10.5 8.5L4 14.5Z" fill="#d02818" stroke="#801008" stroke-width="0.8"/><path d="M9 7C10 4 12 5 13 2" stroke="#806020" stroke-width="1" fill="none"/><path d="M13 0.5L13.8 2.2L15.5 2.5L14 3.5L14.5 5.5L13 4.3L11.3 5.2L12 3.5L10.8 2.2L12.5 2.2Z" fill="#f0d040" stroke="#b08820" stroke-width="0.4"/><path d="M3 9L1 8M5 12L4.5 15M7 14L9.5 15M2.5 11L0.5 12" stroke="#e09030" stroke-width="1"/></svg>
<svg class="ic" style="left:30px;top:508px" width="16" height="16" viewBox="0 0 16 16"><rect x="2.5" y="1.5" width="8" height="8" fill="#dbe7f5" stroke="#6c8cb8" stroke-width="1"/><rect x="5.5" y="4.5" width="8" height="8" fill="#5078b0" stroke="#2c5490" stroke-width="1"/><rect x="9" y="9" width="5.5" height="5.5" fill="#dbe7f5" stroke="#6c8cb8" stroke-width="1"/></svg>
<svg class="ic" style="left:30px;top:530px" width="16" height="16" viewBox="0 0 16 16"><rect x="2.5" y="1.5" width="7" height="7" fill="#dbe7f5" stroke="#6c8cb8" stroke-width="1"/><rect x="5" y="4.5" width="8" height="8" fill="#5078b0" stroke="#2c5490" stroke-width="1"/><rect x="9.5" y="9.5" width="5" height="5" fill="#dbe7f5" stroke="#6c8cb8" stroke-width="1"/></svg>
<svg class="ic" style="left:30px;top:552px" width="16" height="16" viewBox="0 0 16 16"><rect x="5.5" y="5.5" width="9" height="9" fill="#dbe7f5" stroke="#6c8cb8" stroke-width="1"/><rect x="1.5" y="1.5" width="10" height="10" fill="#5078b0" stroke="#2c5490" stroke-width="1"/></svg>
<svg class="ic" style="left:30px;top:574px" width="16" height="16" viewBox="0 0 16 16"><rect x="1.5" y="1.5" width="10" height="10" fill="#5078b0" stroke="#2c5490" stroke-width="1"/><rect x="5.5" y="5.5" width="9" height="9" fill="#dbe7f5" stroke="#6c8cb8" stroke-width="1"/></svg>
<div class="abs" style="left:4px;top:106px;width:18px;height:2px;background:#fff;border-bottom:1px solid #b9b5a4"></div><div class="abs" style="left:4px;top:110px;width:18px;height:2px;background:#fff;border-bottom:1px solid #b9b5a4"></div>
<div class="abs" style="left:29px;top:106px;width:18px;height:2px;background:#fff;border-bottom:1px solid #b9b5a4"></div><div class="abs" style="left:29px;top:110px;width:18px;height:2px;background:#fff;border-bottom:1px solid #b9b5a4"></div>
<div class="abs" style="left:29px;top:496px;width:18px;height:2px;background:#fff;border-bottom:1px solid #b9b5a4"></div><div class="abs" style="left:29px;top:500px;width:18px;height:2px;background:#fff;border-bottom:1px solid #b9b5a4"></div>

<!-- drawing area -->
<div class="abs" style="left:52px;top:102px;width:1228px;height:1px;background:#aca899"></div>
<div class="abs" style="left:53px;top:103px;width:1227px;height:1px;background:#716f64"></div>
<div class="abs" style="left:52px;top:102px;width:1px;height:783px;background:#aca899"></div>
<div class="abs" style="left:53px;top:103px;width:1px;height:782px;background:#716f64"></div>
<div id="draw" class="abs" style="left:54px;top:104px;width:1207px;height:764px;background:#a8a8a8;overflow:hidden">
<svg class="abs" style="left:0;top:-1px" width="1207" height="765" viewBox="54 103 1207 765" shape-rendering="crispEdges">
<!-- shadow -->
<rect x="103" y="103" width="1021" height="709" fill="#000"/>
<!-- paper -->
<rect x="92.5" y="90" width="1026" height="715.5" fill="#fff" stroke="#000" stroke-width="1"/>
<!-- viewport border -->
<path d="M60.5 103V777.5H1261" stroke="#000" stroke-width="1" fill="none"/>
<!-- printable area dashed -->
<path d="M161.5 106.5 H1048.5" stroke="#000" stroke-width="1" fill="none" stroke-dasharray="16.2 9.14" stroke-dashoffset="7.84"/>
<path d="M161.5 779.5 H1048.5" stroke="#000" stroke-width="1" fill="none" stroke-dasharray="16.2 9.14" stroke-dashoffset="7.84"/>
<path d="M161.5 106.5 V779.5" stroke="#000" stroke-width="1" fill="none" stroke-dasharray="15.7 9.26" stroke-dashoffset="8.2"/>
<path d="M1048.5 106.5 V779.5" stroke="#000" stroke-width="1" fill="none" stroke-dasharray="15.7 9.26" stroke-dashoffset="8.2"/>
<rect x="161" y="106" width="1" height="1" fill="#000"/><rect x="1048" y="106" width="1" height="1" fill="#000"/><rect x="161" y="779" width="1" height="1" fill="#000"/><rect x="1048" y="779" width="1" height="1" fill="#000"/>
</svg>
<svg class="abs" style="left:0;top:-1px" width="1207" height="765" viewBox="54 103 1207 765" shape-rendering="crispEdges">
<defs></defs>
<linearGradient id="g1" gradientUnits="userSpaceOnUse" x1="737.53" y1="0" x2="781.68" y2="0"><stop offset="0" stop-color="#d6a238"/><stop offset="0.55" stop-color="#e2c078"/><stop offset="1" stop-color="#efdfb6"/></linearGradient>
<polygon points="737.53,522.26 781.68,522.26 781.68,489.26" fill="url(#g1)" stroke="#000" stroke-width="1"/>
<linearGradient id="g2" gradientUnits="userSpaceOnUse" x1="781.68" y1="0" x2="802.7" y2="0"><stop offset="0" stop-color="#dcb050"/><stop offset="0.45" stop-color="#f0e2bc"/><stop offset="0.8" stop-color="#e6cc8c"/><stop offset="1" stop-color="#dcae4c"/></linearGradient>
<polygon points="781.68,489.26 802.7,473.54 802.7,506.54 781.68,522.26" fill="url(#g2)" stroke="#000" stroke-width="1"/>
<linearGradient id="g3" gradientUnits="userSpaceOnUse" x1="781.68" y1="0" x2="802.7" y2="0"><stop offset="0" stop-color="#dcaa44"/><stop offset="0.5" stop-color="#e4c27a"/><stop offset="1" stop-color="#eed9a6"/></linearGradient>
<polygon points="781.68,516.26 802.7,500.54 802.7,506.54 781.68,522.26" fill="url(#g3)" stroke="none" stroke-width="1"/>
<polygon points="781.68,489.26 802.7,473.54 802.7,506.54 781.68,522.26" fill="none" stroke="#000" stroke-width="1"/>
<linearGradient id="g4" gradientUnits="userSpaceOnUse" x1="660" y1="0" x2="704.15" y2="0"><stop offset="0" stop-color="#d6a238"/><stop offset="0.55" stop-color="#e2c078"/><stop offset="1" stop-color="#efdfb6"/></linearGradient>
<polygon points="660,580.21 704.15,580.21 704.15,547.21" fill="url(#g4)" stroke="#000" stroke-width="1"/>
<linearGradient id="g5" gradientUnits="userSpaceOnUse" x1="704.15" y1="0" x2="726.05" y2="0"><stop offset="0" stop-color="#dcb050"/><stop offset="0.45" stop-color="#f0e2bc"/><stop offset="0.8" stop-color="#e6cc8c"/><stop offset="1" stop-color="#dcae4c"/></linearGradient>
<polygon points="704.15,547.21 726.05,530.84 726.05,563.84 704.15,580.21" fill="url(#g5)" stroke="#000" stroke-width="1"/>
<linearGradient id="g6" gradientUnits="userSpaceOnUse" x1="704.15" y1="0" x2="726.05" y2="0"><stop offset="0" stop-color="#dcaa44"/><stop offset="0.5" stop-color="#e4c27a"/><stop offset="1" stop-color="#eed9a6"/></linearGradient>
<polygon points="704.15,574.21 726.05,557.84 726.05,563.84 704.15,580.21" fill="url(#g6)" stroke="none" stroke-width="1"/>
<polygon points="704.15,547.21 726.05,530.84 726.05,563.84 704.15,580.21" fill="none" stroke="#000" stroke-width="1"/>
<linearGradient id="g7" gradientUnits="userSpaceOnUse" x1="627.5" y1="0" x2="649.4" y2="0"><stop offset="0" stop-color="#dcb050"/><stop offset="0.45" stop-color="#f0e2bc"/><stop offset="0.8" stop-color="#e6cc8c"/><stop offset="1" stop-color="#dcae4c"/></linearGradient>
<polygon points="627.5,604.5 649.4,588.13 649.4,621.13 627.5,637.5" fill="url(#g7)" stroke="#000" stroke-width="1"/>
<linearGradient id="g8" gradientUnits="userSpaceOnUse" x1="627.5" y1="0" x2="649.4" y2="0"><stop offset="0" stop-color="#dcaa44"/><stop offset="0.5" stop-color="#e4c27a"/><stop offset="1" stop-color="#eed9a6"/></linearGradient>
<polygon points="627.5,631.5 649.4,615.13 649.4,621.13 627.5,637.5" fill="url(#g8)" stroke="none" stroke-width="1"/>
<polygon points="627.5,604.5 649.4,588.13 649.4,621.13 627.5,637.5" fill="none" stroke="#000" stroke-width="1"/>
<radialGradient id="g9" gradientUnits="userSpaceOnUse" cx="362.35" cy="615.5" r="17" gradientTransform="translate(0 615.5) scale(1 1) translate(0 -615.5)"><stop offset="0" stop-color="#f2e6c4"/><stop offset="0.55" stop-color="#e8d096"/><stop offset="1" stop-color="#d9ab48"/></radialGradient>
<polygon points="353.35,604.5 375.25,604.5 375.25,615.13 353.35,631.5" fill="url(#g9)" stroke="none" stroke-width="1"/>
<linearGradient id="g10" gradientUnits="userSpaceOnUse" x1="353.35" y1="0" x2="435.6" y2="0"><stop offset="0" stop-color="#d8a53a"/><stop offset="0.35" stop-color="#e4bf6c"/><stop offset="0.7" stop-color="#dfb252"/><stop offset="1" stop-color="#d9a63a"/></linearGradient>
<polygon points="353.35,631.5 375.25,615.13 435.6,615.13 435.6,631.5" fill="url(#g10)" stroke="none" stroke-width="1"/>
<path d="M375.25 604.5V615.13H435.6" stroke="#000" stroke-width="1" fill="none"/>
<radialGradient id="g11" gradientUnits="userSpaceOnUse" cx="499.45" cy="615.5" r="17" gradientTransform="translate(0 615.5) scale(1 1) translate(0 -615.5)"><stop offset="0" stop-color="#f2e6c4"/><stop offset="0.55" stop-color="#e8d096"/><stop offset="1" stop-color="#d9ab48"/></radialGradient>
<polygon points="490.45,604.5 512.35,604.5 512.35,615.13 490.45,631.5" fill="url(#g11)" stroke="none" stroke-width="1"/>
<linearGradient id="g12" gradientUnits="userSpaceOnUse" x1="490.45" y1="0" x2="572.65" y2="0"><stop offset="0" stop-color="#d8a53a"/><stop offset="0.35" stop-color="#e4bf6c"/><stop offset="0.7" stop-color="#dfb252"/><stop offset="1" stop-color="#d9a63a"/></linearGradient>
<polygon points="490.45,631.5 512.35,615.13 572.65,615.13 572.65,631.5" fill="url(#g12)" stroke="none" stroke-width="1"/>
<path d="M512.35 604.5V615.13H572.65" stroke="#000" stroke-width="1" fill="none"/>
<radialGradient id="g13" gradientUnits="userSpaceOnUse" cx="325.93" cy="618" r="33" gradientTransform="translate(0 618) scale(1 0.67) translate(0 -618)"><stop offset="0" stop-color="#f0e4c6"/><stop offset="0.35" stop-color="#ecdcb2"/><stop offset="0.68" stop-color="#e2c47c"/><stop offset="0.88" stop-color="#dab052"/><stop offset="1" stop-color="#d6a43a"/></radialGradient>
<polygon points="298.5,604.5 353.35,604.5 353.35,631.5 298.5,631.5" fill="url(#g13)" stroke="#000" stroke-width="1"/>
<radialGradient id="g14" gradientUnits="userSpaceOnUse" cx="463.02" cy="618" r="33" gradientTransform="translate(0 618) scale(1 0.67) translate(0 -618)"><stop offset="0" stop-color="#f0e4c6"/><stop offset="0.35" stop-color="#ecdcb2"/><stop offset="0.68" stop-color="#e2c47c"/><stop offset="0.88" stop-color="#dab052"/><stop offset="1" stop-color="#d6a43a"/></radialGradient>
<polygon points="435.6,604.5 490.45,604.5 490.45,631.5 435.6,631.5" fill="url(#g14)" stroke="#000" stroke-width="1"/>
<radialGradient id="g15" gradientUnits="userSpaceOnUse" cx="600.08" cy="618" r="33" gradientTransform="translate(0 618) scale(1 0.67) translate(0 -618)"><stop offset="0" stop-color="#f0e4c6"/><stop offset="0.35" stop-color="#ecdcb2"/><stop offset="0.68" stop-color="#e2c47c"/><stop offset="0.88" stop-color="#dab052"/><stop offset="1" stop-color="#d6a43a"/></radialGradient>
<polygon points="572.65,604.5 627.5,604.5 627.5,631.5 572.65,631.5" fill="url(#g15)" stroke="#000" stroke-width="1"/>
<linearGradient id="g16" gradientUnits="userSpaceOnUse" x1="298.5" y1="0" x2="627.5" y2="0"><stop offset="0" stop-color="#e0c48a"/><stop offset="0.5" stop-color="#d4ae66"/><stop offset="1" stop-color="#dcc086"/></linearGradient>
<polygon points="298.5,631.5 627.5,631.5 627.5,637.5 298.5,637.5" fill="url(#g16)" stroke="#000" stroke-width="1"/>
<path d="M649.4 588.13L802.7 473.54" stroke="#000" stroke-width="1" fill="none"/>
<linearGradient id="g17" gradientUnits="userSpaceOnUse" x1="464.5" y1="0" x2="803.5" y2="0"><stop offset="0.0" stop-color="#d8a436"/><stop offset="0.05" stop-color="#dcac46"/><stop offset="0.1" stop-color="#dfb454"/><stop offset="0.15" stop-color="#e2ba60"/><stop offset="0.2" stop-color="#e4c06b"/><stop offset="0.25" stop-color="#e7c575"/><stop offset="0.3" stop-color="#e9c97d"/><stop offset="0.35" stop-color="#eacd84"/><stop offset="0.4" stop-color="#ebcf88"/><stop offset="0.45" stop-color="#ecd18b"/><stop offset="0.5" stop-color="#ecd18c"/><stop offset="0.55" stop-color="#ecd18b"/><stop offset="0.6" stop-color="#ebcf88"/><stop offset="0.65" stop-color="#eacd84"/><stop offset="0.7" stop-color="#e9c97d"/><stop offset="0.75" stop-color="#e7c575"/><stop offset="0.8" stop-color="#e4c06b"/><stop offset="0.85" stop-color="#e2ba60"/><stop offset="0.9" stop-color="#dfb454"/><stop offset="0.95" stop-color="#dcac46"/><stop offset="1.0" stop-color="#d8a436"/></linearGradient>
<polygon points="464.5,474.5 793.5,474.5 803.5,467.5 474.5,467.5" fill="url(#g17)" stroke="#000" stroke-width="1"/>
<linearGradient id="g18" gradientUnits="userSpaceOnUse" x1="793.5" y1="0" x2="803.5" y2="0"><stop offset="0" stop-color="#dcb86c"/><stop offset="1" stop-color="#e6cf98"/></linearGradient>
<polygon points="793.5,474.5 803.5,467.5 803.5,473.5 793.5,480.5" fill="url(#g18)" stroke="#000" stroke-width="1"/>
<linearGradient id="g19" gradientUnits="userSpaceOnUse" x1="464.5" y1="0" x2="793.5" y2="0"><stop offset="0" stop-color="#e0c48a"/><stop offset="0.5" stop-color="#d4ae66"/><stop offset="1" stop-color="#dcc086"/></linearGradient>
<polygon points="464.5,474.5 793.5,474.5 793.5,480.5 464.5,480.5" fill="url(#g19)" stroke="#000" stroke-width="1"/>
<path d="M517.85 480.5L515.15 483.5" stroke="#000" stroke-width="1" fill="none"/>
<path d="M600.1 480.5L597.4 483.5" stroke="#000" stroke-width="1" fill="none"/>
<path d="M737.15 480.5L734.45 483.5" stroke="#000" stroke-width="1" fill="none"/>
<path d="M464.5 480.5L460.62 483.5" stroke="#000" stroke-width="1" fill="none"/>
<linearGradient id="g20" gradientUnits="userSpaceOnUse" x1="430.5" y1="0" x2="781.5" y2="0"><stop offset="0.0" stop-color="#d8a436"/><stop offset="0.05" stop-color="#dcac46"/><stop offset="0.1" stop-color="#dfb454"/><stop offset="0.15" stop-color="#e2ba60"/><stop offset="0.2" stop-color="#e4c06b"/><stop offset="0.25" stop-color="#e7c575"/><stop offset="0.3" stop-color="#e9c97d"/><stop offset="0.35" stop-color="#eacd84"/><stop offset="0.4" stop-color="#ebcf88"/><stop offset="0.45" stop-color="#ecd18b"/><stop offset="0.5" stop-color="#ecd18c"/><stop offset="0.55" stop-color="#ecd18b"/><stop offset="0.6" stop-color="#ebcf88"/><stop offset="0.65" stop-color="#eacd84"/><stop offset="0.7" stop-color="#e9c97d"/><stop offset="0.75" stop-color="#e7c575"/><stop offset="0.8" stop-color="#e4c06b"/><stop offset="0.85" stop-color="#e2ba60"/><stop offset="0.9" stop-color="#dfb454"/><stop offset="0.95" stop-color="#dcac46"/><stop offset="1.0" stop-color="#d8a436"/></linearGradient>
<polygon points="430.5,499.5 759.5,499.5 781.5,483.5 452.5,483.5" fill="url(#g20)" stroke="#000" stroke-width="1"/>
<linearGradient id="g21" gradientUnits="userSpaceOnUse" x1="759.5" y1="0" x2="781.5" y2="0"><stop offset="0" stop-color="#dcb86c"/><stop offset="1" stop-color="#e6cf98"/></linearGradient>
<polygon points="759.5,499.5 781.5,483.5 781.5,490.5 759.5,505.5" fill="url(#g21)" stroke="#000" stroke-width="1"/>
<linearGradient id="g22" gradientUnits="userSpaceOnUse" x1="430.5" y1="0" x2="759.5" y2="0"><stop offset="0" stop-color="#e0c48a"/><stop offset="0.5" stop-color="#d4ae66"/><stop offset="1" stop-color="#dcc086"/></linearGradient>
<polygon points="430.5,499.5 759.5,499.5 759.5,505.5 430.5,505.5" fill="url(#g22)" stroke="#000" stroke-width="1"/>
<path d="M483.85 505.5L481.15 508.5" stroke="#000" stroke-width="1" fill="none"/>
<path d="M566.1 505.5L563.4 508.5" stroke="#000" stroke-width="1" fill="none"/>
<path d="M703.15 505.5L700.45 508.5" stroke="#000" stroke-width="1" fill="none"/>
<path d="M430.5 505.5L426.62 508.5" stroke="#000" stroke-width="1" fill="none"/>
<linearGradient id="g23" gradientUnits="userSpaceOnUse" x1="397.5" y1="0" x2="748.5" y2="0"><stop offset="0.0" stop-color="#d8a436"/><stop offset="0.05" stop-color="#dcac46"/><stop offset="0.1" stop-color="#dfb454"/><stop offset="0.15" stop-color="#e2ba60"/><stop offset="0.2" stop-color="#e4c06b"/><stop offset="0.25" stop-color="#e7c575"/><stop offset="0.3" stop-color="#e9c97d"/><stop offset="0.35" stop-color="#eacd84"/><stop offset="0.4" stop-color="#ebcf88"/><stop offset="0.45" stop-color="#ecd18b"/><stop offset="0.5" stop-color="#ecd18c"/><stop offset="0.55" stop-color="#ecd18b"/><stop offset="0.6" stop-color="#ebcf88"/><stop offset="0.65" stop-color="#eacd84"/><stop offset="0.7" stop-color="#e9c97d"/><stop offset="0.75" stop-color="#e7c575"/><stop offset="0.8" stop-color="#e4c06b"/><stop offset="0.85" stop-color="#e2ba60"/><stop offset="0.9" stop-color="#dfb454"/><stop offset="0.95" stop-color="#dcac46"/><stop offset="1.0" stop-color="#d8a436"/></linearGradient>
<polygon points="397.5,524.5 726.5,524.5 748.5,508.5 419.5,508.5" fill="url(#g23)" stroke="#000" stroke-width="1"/>
<linearGradient id="g24" gradientUnits="userSpaceOnUse" x1="726.5" y1="0" x2="748.5" y2="0"><stop offset="0" stop-color="#dcb86c"/><stop offset="1" stop-color="#e6cf98"/></linearGradient>
<polygon points="726.5,524.5 748.5,508.5 748.5,515.5 726.5,530.5" fill="url(#g24)" stroke="#000" stroke-width="1"/>
<linearGradient id="g25" gradientUnits="userSpaceOnUse" x1="397.5" y1="0" x2="726.5" y2="0"><stop offset="0" stop-color="#e0c48a"/><stop offset="0.5" stop-color="#d4ae66"/><stop offset="1" stop-color="#dcc086"/></linearGradient>
<polygon points="397.5,524.5 726.5,524.5 726.5,530.5 397.5,530.5" fill="url(#g25)" stroke="#000" stroke-width="1"/>
<path d="M450.85 530.5L449.05 532.5" stroke="#000" stroke-width="1" fill="none"/>
<path d="M533.1 530.5L531.3 532.5" stroke="#000" stroke-width="1" fill="none"/>
<path d="M670.15 530.5L668.35 532.5" stroke="#000" stroke-width="1" fill="none"/>
<path d="M397.5 530.5L394.91 532.5" stroke="#000" stroke-width="1" fill="none"/>
<linearGradient id="g26" gradientUnits="userSpaceOnUse" x1="364.5" y1="0" x2="715.5" y2="0"><stop offset="0.0" stop-color="#d8a436"/><stop offset="0.05" stop-color="#dcac46"/><stop offset="0.1" stop-color="#dfb454"/><stop offset="0.15" stop-color="#e2ba60"/><stop offset="0.2" stop-color="#e4c06b"/><stop offset="0.25" stop-color="#e7c575"/><stop offset="0.3" stop-color="#e9c97d"/><stop offset="0.35" stop-color="#eacd84"/><stop offset="0.4" stop-color="#ebcf88"/><stop offset="0.45" stop-color="#ecd18b"/><stop offset="0.5" stop-color="#ecd18c"/><stop offset="0.55" stop-color="#ecd18b"/><stop offset="0.6" stop-color="#ebcf88"/><stop offset="0.65" stop-color="#eacd84"/><stop offset="0.7" stop-color="#e9c97d"/><stop offset="0.75" stop-color="#e7c575"/><stop offset="0.8" stop-color="#e4c06b"/><stop offset="0.85" stop-color="#e2ba60"/><stop offset="0.9" stop-color="#dfb454"/><stop offset="0.95" stop-color="#dcac46"/><stop offset="1.0" stop-color="#d8a436"/></linearGradient>
<polygon points="364.5,549.5 693.5,549.5 715.5,532.5 386.5,532.5" fill="url(#g26)" stroke="#000" stroke-width="1"/>
<linearGradient id="g27" gradientUnits="userSpaceOnUse" x1="693.5" y1="0" x2="715.5" y2="0"><stop offset="0" stop-color="#dcb86c"/><stop offset="1" stop-color="#e6cf98"/></linearGradient>
<polygon points="693.5,549.5 715.5,532.5 715.5,539.5 693.5,555.5" fill="url(#g27)" stroke="#000" stroke-width="1"/>
<linearGradient id="g28" gradientUnits="userSpaceOnUse" x1="364.5" y1="0" x2="693.5" y2="0"><stop offset="0" stop-color="#e0c48a"/><stop offset="0.5" stop-color="#d4ae66"/><stop offset="1" stop-color="#dcc086"/></linearGradient>
<polygon points="364.5,549.5 693.5,549.5 693.5,555.5 364.5,555.5" fill="url(#g28)" stroke="#000" stroke-width="1"/>
<path d="M417.85 555.5L416.05 557.5" stroke="#000" stroke-width="1" fill="none"/>
<path d="M500.1 555.5L498.3 557.5" stroke="#000" stroke-width="1" fill="none"/>
<path d="M637.15 555.5L635.35 557.5" stroke="#000" stroke-width="1" fill="none"/>
<path d="M364.5 555.5L361.91 557.5" stroke="#000" stroke-width="1" fill="none"/>
<linearGradient id="g29" gradientUnits="userSpaceOnUse" x1="331.5" y1="0" x2="682.5" y2="0"><stop offset="0.0" stop-color="#d8a436"/><stop offset="0.05" stop-color="#dcac46"/><stop offset="0.1" stop-color="#dfb454"/><stop offset="0.15" stop-color="#e2ba60"/><stop offset="0.2" stop-color="#e4c06b"/><stop offset="0.25" stop-color="#e7c575"/><stop offset="0.3" stop-color="#e9c97d"/><stop offset="0.35" stop-color="#eacd84"/><stop offset="0.4" stop-color="#ebcf88"/><stop offset="0.45" stop-color="#ecd18b"/><stop offset="0.5" stop-color="#ecd18c"/><stop offset="0.55" stop-color="#ecd18b"/><stop offset="0.6" stop-color="#ebcf88"/><stop offset="0.65" stop-color="#eacd84"/><stop offset="0.7" stop-color="#e9c97d"/><stop offset="0.75" stop-color="#e7c575"/><stop offset="0.8" stop-color="#e4c06b"/><stop offset="0.85" stop-color="#e2ba60"/><stop offset="0.9" stop-color="#dfb454"/><stop offset="0.95" stop-color="#dcac46"/><stop offset="1.0" stop-color="#d8a436"/></linearGradient>
<polygon points="331.5,573.5 660.5,573.5 682.5,557.5 353.5,557.5" fill="url(#g29)" stroke="#000" stroke-width="1"/>
<linearGradient id="g30" gradientUnits="userSpaceOnUse" x1="660.5" y1="0" x2="682.5" y2="0"><stop offset="0" stop-color="#dcb86c"/><stop offset="1" stop-color="#e6cf98"/></linearGradient>
<polygon points="660.5,573.5 682.5,557.5 682.5,564.5 660.5,579.5" fill="url(#g30)" stroke="#000" stroke-width="1"/>
<linearGradient id="g31" gradientUnits="userSpaceOnUse" x1="331.5" y1="0" x2="660.5" y2="0"><stop offset="0" stop-color="#e0c48a"/><stop offset="0.5" stop-color="#d4ae66"/><stop offset="1" stop-color="#dcc086"/></linearGradient>
<polygon points="331.5,573.5 660.5,573.5 660.5,579.5 331.5,579.5" fill="url(#g31)" stroke="#000" stroke-width="1"/>
<path d="M384.85 579.5L383.05 581.5" stroke="#000" stroke-width="1" fill="none"/>
<path d="M467.1 579.5L465.3 581.5" stroke="#000" stroke-width="1" fill="none"/>
<path d="M604.15 579.5L602.35 581.5" stroke="#000" stroke-width="1" fill="none"/>
<path d="M331.5 579.5L328.91 581.5" stroke="#000" stroke-width="1" fill="none"/>
<linearGradient id="g32" gradientUnits="userSpaceOnUse" x1="298.5" y1="0" x2="649.5" y2="0"><stop offset="0.0" stop-color="#d8a436"/><stop offset="0.05" stop-color="#dcac46"/><stop offset="0.1" stop-color="#dfb454"/><stop offset="0.15" stop-color="#e2ba60"/><stop offset="0.2" stop-color="#e4c06b"/><stop offset="0.25" stop-color="#e7c575"/><stop offset="0.3" stop-color="#e9c97d"/><stop offset="0.35" stop-color="#eacd84"/><stop offset="0.4" stop-color="#ebcf88"/><stop offset="0.45" stop-color="#ecd18b"/><stop offset="0.5" stop-color="#ecd18c"/><stop offset="0.55" stop-color="#ecd18b"/><stop offset="0.6" stop-color="#ebcf88"/><stop offset="0.65" stop-color="#eacd84"/><stop offset="0.7" stop-color="#e9c97d"/><stop offset="0.75" stop-color="#e7c575"/><stop offset="0.8" stop-color="#e4c06b"/><stop offset="0.85" stop-color="#e2ba60"/><stop offset="0.9" stop-color="#dfb454"/><stop offset="0.95" stop-color="#dcac46"/><stop offset="1.0" stop-color="#d8a436"/></linearGradient>
<polygon points="298.5,598.5 627.5,598.5 649.5,581.5 320.5,581.5" fill="url(#g32)" stroke="#000" stroke-width="1"/>
<linearGradient id="g33" gradientUnits="userSpaceOnUse" x1="627.5" y1="0" x2="649.5" y2="0"><stop offset="0" stop-color="#dcb86c"/><stop offset="1" stop-color="#e6cf98"/></linearGradient>
<polygon points="627.5,598.5 649.5,581.5 649.5,588.5 627.5,604.5" fill="url(#g33)" stroke="#000" stroke-width="1"/>
<linearGradient id="g34" gradientUnits="userSpaceOnUse" x1="298.5" y1="0" x2="627.5" y2="0"><stop offset="0" stop-color="#e0c48a"/><stop offset="0.5" stop-color="#d4ae66"/><stop offset="1" stop-color="#dcc086"/></linearGradient>
<polygon points="298.5,598.5 627.5,598.5 627.5,604.5 298.5,604.5" fill="url(#g34)" stroke="#000" stroke-width="1"/>
<linearGradient id="g35" gradientUnits="userSpaceOnUse" x1="1357.64" y1="0" x2="1401.79" y2="0"><stop offset="0" stop-color="#d6a238"/><stop offset="0.55" stop-color="#e2c078"/><stop offset="1" stop-color="#efdfb6"/></linearGradient>
<polygon points="1357.64,490.53 1401.79,490.53 1401.79,457.53" fill="url(#g35)" stroke="#000" stroke-width="1"/>
<linearGradient id="g36" gradientUnits="userSpaceOnUse" x1="1401.79" y1="0" x2="1423.69" y2="0"><stop offset="0" stop-color="#dcb050"/><stop offset="0.45" stop-color="#f0e2bc"/><stop offset="0.8" stop-color="#e6cc8c"/><stop offset="1" stop-color="#dcae4c"/></linearGradient>
<polygon points="1401.79,457.53 1423.69,441.16 1423.69,474.16 1401.79,490.53" fill="url(#g36)" stroke="#000" stroke-width="1"/>
<linearGradient id="g37" gradientUnits="userSpaceOnUse" x1="1401.79" y1="0" x2="1423.69" y2="0"><stop offset="0" stop-color="#dcaa44"/><stop offset="0.5" stop-color="#e4c27a"/><stop offset="1" stop-color="#eed9a6"/></linearGradient>
<polygon points="1401.79,484.53 1423.69,468.16 1423.69,474.16 1401.79,490.53" fill="url(#g37)" stroke="#000" stroke-width="1"/>
<polygon points="1401.79,457.53 1423.69,441.16 1423.69,474.16 1401.79,490.53" fill="none" stroke="#000" stroke-width="1"/>
<linearGradient id="g38" gradientUnits="userSpaceOnUse" x1="1258" y1="0" x2="1302.14" y2="0"><stop offset="0" stop-color="#d6a238"/><stop offset="0.55" stop-color="#e2c078"/><stop offset="1" stop-color="#efdfb6"/></linearGradient>
<polygon points="1258,565.02 1302.14,565.02 1302.14,532.02" fill="url(#g38)" stroke="#000" stroke-width="1"/>
<linearGradient id="g39" gradientUnits="userSpaceOnUse" x1="1302.14" y1="0" x2="1324.05" y2="0"><stop offset="0" stop-color="#dcb050"/><stop offset="0.45" stop-color="#f0e2bc"/><stop offset="0.8" stop-color="#e6cc8c"/><stop offset="1" stop-color="#dcae4c"/></linearGradient>
<polygon points="1302.14,532.02 1324.05,515.65 1324.05,548.65 1302.14,565.02" fill="url(#g39)" stroke="#000" stroke-width="1"/>
<linearGradient id="g40" gradientUnits="userSpaceOnUse" x1="1302.14" y1="0" x2="1324.05" y2="0"><stop offset="0" stop-color="#dcaa44"/><stop offset="0.5" stop-color="#e4c27a"/><stop offset="1" stop-color="#eed9a6"/></linearGradient>
<polygon points="1302.14,559.02 1324.05,542.65 1324.05,548.65 1302.14,565.02" fill="url(#g40)" stroke="#000" stroke-width="1"/>
<polygon points="1302.14,532.02 1324.05,515.65 1324.05,548.65 1302.14,565.02" fill="none" stroke="#000" stroke-width="1"/>
<linearGradient id="g41" gradientUnits="userSpaceOnUse" x1="1202.5" y1="0" x2="1224.4" y2="0"><stop offset="0" stop-color="#dcb050"/><stop offset="0.45" stop-color="#f0e2bc"/><stop offset="0.8" stop-color="#e6cc8c"/><stop offset="1" stop-color="#dcae4c"/></linearGradient>
<polygon points="1202.5,606.5 1224.4,590.13 1224.4,623.13 1202.5,639.5" fill="url(#g41)" stroke="#000" stroke-width="1"/>
<linearGradient id="g42" gradientUnits="userSpaceOnUse" x1="1202.5" y1="0" x2="1224.4" y2="0"><stop offset="0" stop-color="#dcaa44"/><stop offset="0.5" stop-color="#e4c27a"/><stop offset="1" stop-color="#eed9a6"/></linearGradient>
<polygon points="1202.5,633.5 1224.4,617.13 1224.4,623.13 1202.5,639.5" fill="url(#g42)" stroke="#000" stroke-width="1"/>
<polygon points="1202.5,606.5 1224.4,590.13 1224.4,623.13 1202.5,639.5" fill="none" stroke="#000" stroke-width="1"/>
<radialGradient id="g43" gradientUnits="userSpaceOnUse" cx="937.35" cy="617.5" r="17" gradientTransform="translate(0 617.5) scale(1 1) translate(0 -617.5)"><stop offset="0" stop-color="#f2e6c4"/><stop offset="0.55" stop-color="#e8d096"/><stop offset="1" stop-color="#d9ab48"/></radialGradient>
<polygon points="928.35,606.5 950.25,606.5 950.25,617.13 928.35,633.5" fill="url(#g43)" stroke="none" stroke-width="1"/>
<linearGradient id="g44" gradientUnits="userSpaceOnUse" x1="928.35" y1="0" x2="1010.6" y2="0"><stop offset="0" stop-color="#d8a53a"/><stop offset="0.35" stop-color="#e4bf6c"/><stop offset="0.7" stop-color="#dfb252"/><stop offset="1" stop-color="#d9a63a"/></linearGradient>
<polygon points="928.35,633.5 950.25,617.13 1010.6,617.13 1010.6,633.5" fill="url(#g44)" stroke="none" stroke-width="1"/>
<path d="M950.25 606.5V617.13H1010.6" stroke="#000" stroke-width="1" fill="none"/>
<radialGradient id="g45" gradientUnits="userSpaceOnUse" cx="1074.45" cy="617.5" r="17" gradientTransform="translate(0 617.5) scale(1 1) translate(0 -617.5)"><stop offset="0" stop-color="#f2e6c4"/><stop offset="0.55" stop-color="#e8d096"/><stop offset="1" stop-color="#d9ab48"/></radialGradient>
<polygon points="1065.45,606.5 1087.35,606.5 1087.35,617.13 1065.45,633.5" fill="url(#g45)" stroke="none" stroke-width="1"/>
<linearGradient id="g46" gradientUnits="userSpaceOnUse" x1="1065.45" y1="0" x2="1147.65" y2="0"><stop offset="0" stop-color="#d8a53a"/><stop offset="0.35" stop-color="#e4bf6c"/><stop offset="0.7" stop-color="#dfb252"/><stop offset="1" stop-color="#d9a63a"/></linearGradient>
<polygon points="1065.45,633.5 1087.35,617.13 1147.65,617.13 1147.65,633.5" fill="url(#g46)" stroke="none" stroke-width="1"/>
<path d="M1087.35 606.5V617.13H1147.65" stroke="#000" stroke-width="1" fill="none"/>
<radialGradient id="g47" gradientUnits="userSpaceOnUse" cx="900.92" cy="620" r="33" gradientTransform="translate(0 620) scale(1 0.67) translate(0 -620)"><stop offset="0" stop-color="#f0e4c6"/><stop offset="0.35" stop-color="#ecdcb2"/><stop offset="0.68" stop-color="#e2c47c"/><stop offset="0.88" stop-color="#dab052"/><stop offset="1" stop-color="#d6a43a"/></radialGradient>
<polygon points="873.5,606.5 928.35,606.5 928.35,633.5 873.5,633.5" fill="url(#g47)" stroke="#000" stroke-width="1"/>
<radialGradient id="g48" gradientUnits="userSpaceOnUse" cx="1038.03" cy="620" r="33" gradientTransform="translate(0 620) scale(1 0.67) translate(0 -620)"><stop offset="0" stop-color="#f0e4c6"/><stop offset="0.35" stop-color="#ecdcb2"/><stop offset="0.68" stop-color="#e2c47c"/><stop offset="0.88" stop-color="#dab052"/><stop offset="1" stop-color="#d6a43a"/></radialGradient>
<polygon points="1010.6,606.5 1065.45,606.5 1065.45,633.5 1010.6,633.5" fill="url(#g48)" stroke="#000" stroke-width="1"/>
<radialGradient id="g49" gradientUnits="userSpaceOnUse" cx="1175.08" cy="620" r="33" gradientTransform="translate(0 620) scale(1 0.67) translate(0 -620)"><stop offset="0" stop-color="#f0e4c6"/><stop offset="0.35" stop-color="#ecdcb2"/><stop offset="0.68" stop-color="#e2c47c"/><stop offset="0.88" stop-color="#dab052"/><stop offset="1" stop-color="#d6a43a"/></radialGradient>
<polygon points="1147.65,606.5 1202.5,606.5 1202.5,633.5 1147.65,633.5" fill="url(#g49)" stroke="#000" stroke-width="1"/>
<linearGradient id="g50" gradientUnits="userSpaceOnUse" x1="873.5" y1="0" x2="1202.5" y2="0"><stop offset="0" stop-color="#e0c48a"/><stop offset="0.5" stop-color="#d4ae66"/><stop offset="1" stop-color="#dcc086"/></linearGradient>
<polygon points="873.5,633.5 1202.5,633.5 1202.5,639.5 873.5,639.5" fill="url(#g50)" stroke="#000" stroke-width="1"/>
<path d="M1224.4 590.13L1423.6 441.23" stroke="#000" stroke-width="1" fill="none"/>
<linearGradient id="g51" gradientUnits="userSpaceOnUse" x1="1071.5" y1="0" x2="1422.5" y2="0"><stop offset="0.0" stop-color="#d8a436"/><stop offset="0.05" stop-color="#dcac46"/><stop offset="0.1" stop-color="#dfb454"/><stop offset="0.15" stop-color="#e2ba60"/><stop offset="0.2" stop-color="#e4c06b"/><stop offset="0.25" stop-color="#e7c575"/><stop offset="0.3" stop-color="#e9c97d"/><stop offset="0.35" stop-color="#eacd84"/><stop offset="0.4" stop-color="#ebcf88"/><stop offset="0.45" stop-color="#ecd18b"/><stop offset="0.5" stop-color="#ecd18c"/><stop offset="0.55" stop-color="#ecd18b"/><stop offset="0.6" stop-color="#ebcf88"/><stop offset="0.65" stop-color="#eacd84"/><stop offset="0.7" stop-color="#e9c97d"/><stop offset="0.75" stop-color="#e7c575"/><stop offset="0.8" stop-color="#e4c06b"/><stop offset="0.85" stop-color="#e2ba60"/><stop offset="0.9" stop-color="#dfb454"/><stop offset="0.95" stop-color="#dcac46"/><stop offset="1.0" stop-color="#d8a436"/></linearGradient>
<polygon points="1071.5,452.5 1400.5,452.5 1422.5,436.5 1093.5,436.5" fill="url(#g51)" stroke="#000" stroke-width="1"/>
<linearGradient id="g52" gradientUnits="userSpaceOnUse" x1="1400.5" y1="0" x2="1422.5" y2="0"><stop offset="0" stop-color="#dcb86c"/><stop offset="1" stop-color="#e6cf98"/></linearGradient>
<polygon points="1400.5,452.5 1422.5,436.5 1422.5,443.5 1400.5,458.5" fill="url(#g52)" stroke="#000" stroke-width="1"/>
<linearGradient id="g53" gradientUnits="userSpaceOnUse" x1="1071.5" y1="0" x2="1400.5" y2="0"><stop offset="0" stop-color="#e0c48a"/><stop offset="0.5" stop-color="#d4ae66"/><stop offset="1" stop-color="#dcc086"/></linearGradient>
<polygon points="1071.5,452.5 1400.5,452.5 1400.5,458.5 1071.5,458.5" fill="url(#g53)" stroke="#000" stroke-width="1"/>
<path d="M1117.05 458.5L1114.35 461.5" stroke="#000" stroke-width="1" fill="none"/>
<path d="M1199.3 458.5L1196.6 461.5" stroke="#000" stroke-width="1" fill="none"/>
<path d="M1254.15 458.5L1251.45 461.5" stroke="#000" stroke-width="1" fill="none"/>
<path d="M1336.35 458.5L1333.65 461.5" stroke="#000" stroke-width="1" fill="none"/>
<path d="M1071.5 458.5L1067.62 461.5" stroke="#000" stroke-width="1" fill="none"/>
<linearGradient id="g54" gradientUnits="userSpaceOnUse" x1="1038.5" y1="0" x2="1389.5" y2="0"><stop offset="0.0" stop-color="#d8a436"/><stop offset="0.05" stop-color="#dcac46"/><stop offset="0.1" stop-color="#dfb454"/><stop offset="0.15" stop-color="#e2ba60"/><stop offset="0.2" stop-color="#e4c06b"/><stop offset="0.25" stop-color="#e7c575"/><stop offset="0.3" stop-color="#e9c97d"/><stop offset="0.35" stop-color="#eacd84"/><stop offset="0.4" stop-color="#ebcf88"/><stop offset="0.45" stop-color="#ecd18b"/><stop offset="0.5" stop-color="#ecd18c"/><stop offset="0.55" stop-color="#ecd18b"/><stop offset="0.6" stop-color="#ebcf88"/><stop offset="0.65" stop-color="#eacd84"/><stop offset="0.7" stop-color="#e9c97d"/><stop offset="0.75" stop-color="#e7c575"/><stop offset="0.8" stop-color="#e4c06b"/><stop offset="0.85" stop-color="#e2ba60"/><stop offset="0.9" stop-color="#dfb454"/><stop offset="0.95" stop-color="#dcac46"/><stop offset="1.0" stop-color="#d8a436"/></linearGradient>
<polygon points="1038.5,477.5 1367.5,477.5 1389.5,461.5 1060.5,461.5" fill="url(#g54)" stroke="#000" stroke-width="1"/>
<linearGradient id="g55" gradientUnits="userSpaceOnUse" x1="1367.5" y1="0" x2="1389.5" y2="0"><stop offset="0" stop-color="#dcb86c"/><stop offset="1" stop-color="#e6cf98"/></linearGradient>
<polygon points="1367.5,477.5 1389.5,461.5 1389.5,468.5 1367.5,483.5" fill="url(#g55)" stroke="#000" stroke-width="1"/>
<linearGradient id="g56" gradientUnits="userSpaceOnUse" x1="1038.5" y1="0" x2="1367.5" y2="0"><stop offset="0" stop-color="#e0c48a"/><stop offset="0.5" stop-color="#d4ae66"/><stop offset="1" stop-color="#dcc086"/></linearGradient>
<polygon points="1038.5,477.5 1367.5,477.5 1367.5,483.5 1038.5,483.5" fill="url(#g56)" stroke="#000" stroke-width="1"/>
<path d="M1084.05 483.5L1082.25 485.5" stroke="#000" stroke-width="1" fill="none"/>
<path d="M1166.3 483.5L1164.5 485.5" stroke="#000" stroke-width="1" fill="none"/>
<path d="M1221.15 483.5L1219.35 485.5" stroke="#000" stroke-width="1" fill="none"/>
<path d="M1303.35 483.5L1301.55 485.5" stroke="#000" stroke-width="1" fill="none"/>
<path d="M1038.5 483.5L1035.91 485.5" stroke="#000" stroke-width="1" fill="none"/>
<linearGradient id="g57" gradientUnits="userSpaceOnUse" x1="1005.5" y1="0" x2="1356.5" y2="0"><stop offset="0.0" stop-color="#d8a436"/><stop offset="0.05" stop-color="#dcac46"/><stop offset="0.1" stop-color="#dfb454"/><stop offset="0.15" stop-color="#e2ba60"/><stop offset="0.2" stop-color="#e4c06b"/><stop offset="0.25" stop-color="#e7c575"/><stop offset="0.3" stop-color="#e9c97d"/><stop offset="0.35" stop-color="#eacd84"/><stop offset="0.4" stop-color="#ebcf88"/><stop offset="0.45" stop-color="#ecd18b"/><stop offset="0.5" stop-color="#ecd18c"/><stop offset="0.55" stop-color="#ecd18b"/><stop offset="0.6" stop-color="#ebcf88"/><stop offset="0.65" stop-color="#eacd84"/><stop offset="0.7" stop-color="#e9c97d"/><stop offset="0.75" stop-color="#e7c575"/><stop offset="0.8" stop-color="#e4c06b"/><stop offset="0.85" stop-color="#e2ba60"/><stop offset="0.9" stop-color="#dfb454"/><stop offset="0.95" stop-color="#dcac46"/><stop offset="1.0" stop-color="#d8a436"/></linearGradient>
<polygon points="1005.5,502.5 1334.5,502.5 1356.5,485.5 1027.5,485.5" fill="url(#g57)" stroke="#000" stroke-width="1"/>
<linearGradient id="g58" gradientUnits="userSpaceOnUse" x1="1334.5" y1="0" x2="1356.5" y2="0"><stop offset="0" stop-color="#dcb86c"/><stop offset="1" stop-color="#e6cf98"/></linearGradient>
<polygon points="1334.5,502.5 1356.5,485.5 1356.5,492.5 1334.5,508.5" fill="url(#g58)" stroke="#000" stroke-width="1"/>
<linearGradient id="g59" gradientUnits="userSpaceOnUse" x1="1005.5" y1="0" x2="1334.5" y2="0"><stop offset="0" stop-color="#e0c48a"/><stop offset="0.5" stop-color="#d4ae66"/><stop offset="1" stop-color="#dcc086"/></linearGradient>
<polygon points="1005.5,502.5 1334.5,502.5 1334.5,508.5 1005.5,508.5" fill="url(#g59)" stroke="#000" stroke-width="1"/>
<path d="M1051.05 508.5L1049.25 510.5" stroke="#000" stroke-width="1" fill="none"/>
<path d="M1133.3 508.5L1131.5 510.5" stroke="#000" stroke-width="1" fill="none"/>
<path d="M1188.15 508.5L1186.35 510.5" stroke="#000" stroke-width="1" fill="none"/>
<path d="M1270.35 508.5L1268.55 510.5" stroke="#000" stroke-width="1" fill="none"/>
<path d="M1005.5 508.5L1002.91 510.5" stroke="#000" stroke-width="1" fill="none"/>
<linearGradient id="g60" gradientUnits="userSpaceOnUse" x1="972.5" y1="0" x2="1323.5" y2="0"><stop offset="0.0" stop-color="#d8a436"/><stop offset="0.05" stop-color="#dcac46"/><stop offset="0.1" stop-color="#dfb454"/><stop offset="0.15" stop-color="#e2ba60"/><stop offset="0.2" stop-color="#e4c06b"/><stop offset="0.25" stop-color="#e7c575"/><stop offset="0.3" stop-color="#e9c97d"/><stop offset="0.35" stop-color="#eacd84"/><stop offset="0.4" stop-color="#ebcf88"/><stop offset="0.45" stop-color="#ecd18b"/><stop offset="0.5" stop-color="#ecd18c"/><stop offset="0.55" stop-color="#ecd18b"/><stop offset="0.6" stop-color="#ebcf88"/><stop offset="0.65" stop-color="#eacd84"/><stop offset="0.7" stop-color="#e9c97d"/><stop offset="0.75" stop-color="#e7c575"/><stop offset="0.8" stop-color="#e4c06b"/><stop offset="0.85" stop-color="#e2ba60"/><stop offset="0.9" stop-color="#dfb454"/><stop offset="0.95" stop-color="#dcac46"/><stop offset="1.0" stop-color="#d8a436"/></linearGradient>
<polygon points="972.5,526.5 1301.5,526.5 1323.5,510.5 994.5,510.5" fill="url(#g60)" stroke="#000" stroke-width="1"/>
<linearGradient id="g61" gradientUnits="userSpaceOnUse" x1="1301.5" y1="0" x2="1323.5" y2="0"><stop offset="0" stop-color="#dcb86c"/><stop offset="1" stop-color="#e6cf98"/></linearGradient>
<polygon points="1301.5,526.5 1323.5,510.5 1323.5,517.5 1301.5,532.5" fill="url(#g61)" stroke="#000" stroke-width="1"/>
<linearGradient id="g62" gradientUnits="userSpaceOnUse" x1="972.5" y1="0" x2="1301.5" y2="0"><stop offset="0" stop-color="#e0c48a"/><stop offset="0.5" stop-color="#d4ae66"/><stop offset="1" stop-color="#dcc086"/></linearGradient>
<polygon points="972.5,526.5 1301.5,526.5 1301.5,532.5 972.5,532.5" fill="url(#g62)" stroke="#000" stroke-width="1"/>
<path d="M1018.05 532.5L1016.25 534.5" stroke="#000" stroke-width="1" fill="none"/>
<path d="M1100.3 532.5L1098.5 534.5" stroke="#000" stroke-width="1" fill="none"/>
<path d="M1155.15 532.5L1153.35 534.5" stroke="#000" stroke-width="1" fill="none"/>
<path d="M1237.35 532.5L1235.55 534.5" stroke="#000" stroke-width="1" fill="none"/>
<path d="M972.5 532.5L969.91 534.5" stroke="#000" stroke-width="1" fill="none"/>
<linearGradient id="g63" gradientUnits="userSpaceOnUse" x1="939.5" y1="0" x2="1290.5" y2="0"><stop offset="0.0" stop-color="#d8a436"/><stop offset="0.05" stop-color="#dcac46"/><stop offset="0.1" stop-color="#dfb454"/><stop offset="0.15" stop-color="#e2ba60"/><stop offset="0.2" stop-color="#e4c06b"/><stop offset="0.25" stop-color="#e7c575"/><stop offset="0.3" stop-color="#e9c97d"/><stop offset="0.35" stop-color="#eacd84"/><stop offset="0.4" stop-color="#ebcf88"/><stop offset="0.45" stop-color="#ecd18b"/><stop offset="0.5" stop-color="#ecd18c"/><stop offset="0.55" stop-color="#ecd18b"/><stop offset="0.6" stop-color="#ebcf88"/><stop offset="0.65" stop-color="#eacd84"/><stop offset="0.7" stop-color="#e9c97d"/><stop offset="0.75" stop-color="#e7c575"/><stop offset="0.8" stop-color="#e4c06b"/><stop offset="0.85" stop-color="#e2ba60"/><stop offset="0.9" stop-color="#dfb454"/><stop offset="0.95" stop-color="#dcac46"/><stop offset="1.0" stop-color="#d8a436"/></linearGradient>
<polygon points="939.5,551.5 1268.5,551.5 1290.5,534.5 961.5,534.5" fill="url(#g63)" stroke="#000" stroke-width="1"/>
<linearGradient id="g64" gradientUnits="userSpaceOnUse" x1="1268.5" y1="0" x2="1290.5" y2="0"><stop offset="0" stop-color="#dcb86c"/><stop offset="1" stop-color="#e6cf98"/></linearGradient>
<polygon points="1268.5,551.5 1290.5,534.5 1290.5,541.5 1268.5,557.5" fill="url(#g64)" stroke="#000" stroke-width="1"/>
<linearGradient id="g65" gradientUnits="userSpaceOnUse" x1="939.5" y1="0" x2="1268.5" y2="0"><stop offset="0" stop-color="#e0c48a"/><stop offset="0.5" stop-color="#d4ae66"/><stop offset="1" stop-color="#dcc086"/></linearGradient>
<polygon points="939.5,551.5 1268.5,551.5 1268.5,557.5 939.5,557.5" fill="url(#g65)" stroke="#000" stroke-width="1"/>
<path d="M985.05 557.5L983.25 559.5" stroke="#000" stroke-width="1" fill="none"/>
<path d="M1067.3 557.5L1065.5 559.5" stroke="#000" stroke-width="1" fill="none"/>
<path d="M1122.15 557.5L1120.35 559.5" stroke="#000" stroke-width="1" fill="none"/>
<path d="M1204.35 557.5L1202.55 559.5" stroke="#000" stroke-width="1" fill="none"/>
<path d="M939.5 557.5L936.91 559.5" stroke="#000" stroke-width="1" fill="none"/>
<linearGradient id="g66" gradientUnits="userSpaceOnUse" x1="906.5" y1="0" x2="1257.5" y2="0"><stop offset="0.0" stop-color="#d8a436"/><stop offset="0.05" stop-color="#dcac46"/><stop offset="0.1" stop-color="#dfb454"/><stop offset="0.15" stop-color="#e2ba60"/><stop offset="0.2" stop-color="#e4c06b"/><stop offset="0.25" stop-color="#e7c575"/><stop offset="0.3" stop-color="#e9c97d"/><stop offset="0.35" stop-color="#eacd84"/><stop offset="0.4" stop-color="#ebcf88"/><stop offset="0.45" stop-color="#ecd18b"/><stop offset="0.5" stop-color="#ecd18c"/><stop offset="0.55" stop-color="#ecd18b"/><stop offset="0.6" stop-color="#ebcf88"/><stop offset="0.65" stop-color="#eacd84"/><stop offset="0.7" stop-color="#e9c97d"/><stop offset="0.75" stop-color="#e7c575"/><stop offset="0.8" stop-color="#e4c06b"/><stop offset="0.85" stop-color="#e2ba60"/><stop offset="0.9" stop-color="#dfb454"/><stop offset="0.95" stop-color="#dcac46"/><stop offset="1.0" stop-color="#d8a436"/></linearGradient>
<polygon points="906.5,575.5 1235.5,575.5 1257.5,559.5 928.5,559.5" fill="url(#g66)" stroke="#000" stroke-width="1"/>
<linearGradient id="g67" gradientUnits="userSpaceOnUse" x1="1235.5" y1="0" x2="1257.5" y2="0"><stop offset="0" stop-color="#dcb86c"/><stop offset="1" stop-color="#e6cf98"/></linearGradient>
<polygon points="1235.5,575.5 1257.5,559.5 1257.5,566.5 1235.5,581.5" fill="url(#g67)" stroke="#000" stroke-width="1"/>
<linearGradient id="g68" gradientUnits="userSpaceOnUse" x1="906.5" y1="0" x2="1235.5" y2="0"><stop offset="0" stop-color="#e0c48a"/><stop offset="0.5" stop-color="#d4ae66"/><stop offset="1" stop-color="#dcc086"/></linearGradient>
<polygon points="906.5,575.5 1235.5,575.5 1235.5,581.5 906.5,581.5" fill="url(#g68)" stroke="#000" stroke-width="1"/>
<path d="M952.05 581.5L950.25 583.5" stroke="#000" stroke-width="1" fill="none"/>
<path d="M1034.3 581.5L1032.5 583.5" stroke="#000" stroke-width="1" fill="none"/>
<path d="M1089.15 581.5L1087.35 583.5" stroke="#000" stroke-width="1" fill="none"/>
<path d="M1171.35 581.5L1169.55 583.5" stroke="#000" stroke-width="1" fill="none"/>
<path d="M906.5 581.5L903.91 583.5" stroke="#000" stroke-width="1" fill="none"/>
<linearGradient id="g69" gradientUnits="userSpaceOnUse" x1="873.5" y1="0" x2="1224.5" y2="0"><stop offset="0.0" stop-color="#d8a436"/><stop offset="0.05" stop-color="#dcac46"/><stop offset="0.1" stop-color="#dfb454"/><stop offset="0.15" stop-color="#e2ba60"/><stop offset="0.2" stop-color="#e4c06b"/><stop offset="0.25" stop-color="#e7c575"/><stop offset="0.3" stop-color="#e9c97d"/><stop offset="0.35" stop-color="#eacd84"/><stop offset="0.4" stop-color="#ebcf88"/><stop offset="0.45" stop-color="#ecd18b"/><stop offset="0.5" stop-color="#ecd18c"/><stop offset="0.55" stop-color="#ecd18b"/><stop offset="0.6" stop-color="#ebcf88"/><stop offset="0.65" stop-color="#eacd84"/><stop offset="0.7" stop-color="#e9c97d"/><stop offset="0.75" stop-color="#e7c575"/><stop offset="0.8" stop-color="#e4c06b"/><stop offset="0.85" stop-color="#e2ba60"/><stop offset="0.9" stop-color="#dfb454"/><stop offset="0.95" stop-color="#dcac46"/><stop offset="1.0" stop-color="#d8a436"/></linearGradient>
<polygon points="873.5,600.5 1202.5,600.5 1224.5,583.5 895.5,583.5" fill="url(#g69)" stroke="#000" stroke-width="1"/>
<linearGradient id="g70" gradientUnits="userSpaceOnUse" x1="1202.5" y1="0" x2="1224.5" y2="0"><stop offset="0" stop-color="#dcb86c"/><stop offset="1" stop-color="#e6cf98"/></linearGradient>
<polygon points="1202.5,600.5 1224.5,583.5 1224.5,590.5 1202.5,606.5" fill="url(#g70)" stroke="#000" stroke-width="1"/>
<linearGradient id="g71" gradientUnits="userSpaceOnUse" x1="873.5" y1="0" x2="1202.5" y2="0"><stop offset="0" stop-color="#e0c48a"/><stop offset="0.5" stop-color="#d4ae66"/><stop offset="1" stop-color="#dcc086"/></linearGradient>
<polygon points="873.5,600.5 1202.5,600.5 1202.5,606.5 873.5,606.5" fill="url(#g71)" stroke="#000" stroke-width="1"/>
</svg>
<svg class="abs" style="left:0;top:-1px" width="1207" height="765" viewBox="54 103 1207 765" shape-rendering="crispEdges">
<path d="M299.5 640L299.5 679" stroke="#000" stroke-width="1" fill="none"/>
<path d="M627.5 640L627.5 679" stroke="#000" stroke-width="1" fill="none"/>
<path d="M299.5 674.5L627.5 674.5" stroke="#000" stroke-width="1" fill="none"/>
<polygon points="300,674.5 308,672.6 308,676.4" fill="#000" stroke="#000" stroke-width="0.6"/>
<polygon points="627,674.5 619.5,676.4 619.5,672.6" fill="#000" stroke="#000" stroke-width="0.6"/>
<g transform="translate(463.3 663) rotate(0)" fill="none" stroke="#000" stroke-width="1"><path transform="translate(-25.85 -8.5)" d="M0 2.89 L3.5 0 L3.5 17 M0 17 L7 17"/><path transform="translate(-15.45 -8.5)" d="M0 4.25 C0 1.36 2.5 0 6.25 0 C10.62 0 12.5 1.7 12.5 4.59 C12.5 9.35 0 11.9 0 17 L12.5 17"/><path transform="translate(0.45 -8.5)" d="M0 4.95 A5.5 4.95 0 0 1 11 4.95 L11 12.05 A5.5 4.95 0 0 1 0 12.05 Z"/><path transform="translate(14.85 -8.5)" d="M0 4.95 A5.5 4.95 0 0 1 11 4.95 L11 12.05 A5.5 4.95 0 0 1 0 12.05 Z"/></g>
<path d="M629 640L653.5 670" stroke="#000" stroke-width="1" fill="none"/>
<path d="M804.5 508L828.5 539" stroke="#000" stroke-width="1" fill="none"/>
<path d="M650 665L825.2 535.6" stroke="#000" stroke-width="1" fill="none"/>
<polygon points="650,665 655.31,658.72 657.56,661.78" fill="#000" stroke="#000" stroke-width="0.6"/>
<polygon points="825.2,535.6 819.89,541.88 817.64,538.82" fill="#000" stroke="#000" stroke-width="0.6"/>
<g transform="translate(730.9 591.6) rotate(-36.45)" fill="none" stroke="#000" stroke-width="1"><path transform="translate(-20.9 -8.75)" d="M6 0 A5.16 4.11 0 1 1 6 8.22 A5.16 4.11 0 1 1 6 0 Z M6 8.22 A6 4.64 0 1 1 6 17.5 A6 4.64 0 1 1 6 8.22 Z"/><path transform="translate(-5.5 -8.75)" d="M0 5.17 A5.75 5.17 0 0 1 11.5 5.17 L11.5 12.32 A5.75 5.17 0 0 1 0 12.32 Z"/><path transform="translate(9.4 -8.75)" d="M0 5.17 A5.75 5.17 0 0 1 11.5 5.17 L11.5 12.32 A5.75 5.17 0 0 1 0 12.32 Z"/></g>
<path d="M805 467.5L853 467.5" stroke="#000" stroke-width="1" fill="none"/>
<path d="M805 506.5L853 506.5" stroke="#000" stroke-width="1" fill="none"/>
<path d="M848.5 414L848.5 506.5" stroke="#000" stroke-width="1" fill="none"/>
<polygon points="848.5,468 850.4,475.5 846.6,475.5" fill="#000" stroke="#000" stroke-width="0.6"/>
<polygon points="848.5,506 846.6,498.5 850.4,498.5" fill="#000" stroke="#000" stroke-width="0.6"/>
<g transform="translate(837.8 436.5) rotate(-90)" fill="none" stroke="#000" stroke-width="1"><path transform="translate(-20.4 -8.75)" d="M0 2.98 L3.5 0 L3.5 17.5 M0 17.5 L7 17.5"/><path transform="translate(-10 -8.75)" d="M9.72 17.5 L9.72 0 L0 12.25 L13.5 12.25"/><path transform="translate(6.9 -8.75)" d="M9.72 17.5 L9.72 0 L0 12.25 L13.5 12.25"/></g>
<path d="M900 114.5L964 114.5" stroke="#000" stroke-width="1" fill="none"/>
<path d="M932.5 103L932.5 147" stroke="#000" stroke-width="1" fill="none"/>
<rect x="929.5" y="111.5" width="6" height="6" fill="none" stroke="#000" stroke-width="1"/>
<g fill="none" stroke="#5c5cb4" stroke-width="1"><path d="M75.5 761 V846.5 H128.5 Z"/><path d="M75.5 833.5 H88.5 V846.5"/><path d="M101.5 833.5 L115 846.5 M115 833.5 L101.5 846.5"/><path d="M76.5 788.5 L82 794 L87.5 788.5 M82 794 V800"/></g>
<path d="M92.5 788.5 L102.5 805" stroke="#0000ff" stroke-width="1" fill="none"/>
<path d="M102.8 805 L106.8 812" stroke="#ffff00" stroke-width="1" fill="none"/>
<rect x="75" y="777" width="1" height="1" fill="#ffff00"/><rect x="85" y="776" width="1" height="2" fill="#ffff00"/><rect x="92" y="788" width="1" height="2" fill="#ffff00"/>
</svg>
</div>
<!-- vertical scrollbar -->
<div class="abs" style="left:1261px;top:104px;width:19px;height:764px;background:linear-gradient(to right,#f0efe8 0%,#f8f7f2 30%,#fdfdfb 100%)"></div>
<div class="sbtn" style="left:1262px;top:105px;width:15px"><svg width="9" height="6" viewBox="0 0 9 6"><path d="M1 5L4.500 1.500L8 5" stroke="#4d6185" stroke-width="2" fill="none"/></svg></div>
<div class="sbtn" style="left:1262px;top:834px;width:15px"><svg width="8" height="8" viewBox="0 0 8 8" style="left:3px;top:2.5px"><path d="M0 0.500H8M0 2.500H8M0 4.500H8M0 6.500H8" stroke="#eef4fe" stroke-width="1"/><path d="M0 1.500H8M0 3.500H8M0 5.500H8M0 7.500H8" stroke="#8cb0f8" stroke-width="1"/></svg></div>
<div class="sbtn" style="left:1262px;top:851px;width:15px"><svg width="9" height="6" viewBox="0 0 9 6"><path d="M1 1L4.500 4.500L8 1" stroke="#4d6185" stroke-width="2" fill="none"/></svg></div>
<!-- horizontal tabs + scrollbar -->
<div class="abs" style="left:54px;top:868px;width:1226px;height:17px;background:#ece9d8"></div>
<div class="abs" style="left:54px;top:868px;width:796px;height:1px;background:#000"></div>
<div class="abs" style="left:856px;top:868px;width:405px;height:17px;background:linear-gradient(to bottom,#f0efe8 0%,#f8f7f2 30%,#fdfdfb 100%)"></div>
<div class="abs" style="left:850px;top:869px;width:5px;height:14px;background:#f6f5ee;border-left:1px solid #fff;border-right:1px solid #aca899"></div>
<div class="sbtn" style="left:856px;top:869px"><svg width="6" height="9" viewBox="0 0 6 9" style="left:3px;top:2px"><path d="M5 1L1.500 4.500L5 8" stroke="#4d6185" stroke-width="2" fill="none"/></svg></div>
<div class="sbtn" style="left:873px;top:869px;width:17px"><svg width="8" height="8" viewBox="0 0 8 8" style="left:3.5px;top:2.5px"><path d="M0.500 0V8M2.500 0V8M4.500 0V8M6.500 0V8" stroke="#eef4fe" stroke-width="1"/><path d="M1.500 0V8M3.500 0V8M5.500 0V8M7.500 0V8" stroke="#8cb0f8" stroke-width="1"/></svg></div>
<div class="sbtn" style="left:1244px;top:869px"><svg width="6" height="9" viewBox="0 0 6 9" style="left:4.5px;top:2px"><path d="M1 1L4.500 4.500L1 8" stroke="#4d6185" stroke-width="2" fill="none"/></svg></div>
<!-- tab nav buttons -->
<svg class="abs" style="left:54px;top:868px" width="230" height="17" viewBox="0 0 230 17">
<g fill="#ece9d8" stroke="#fff" stroke-width="1"><rect x="0.5" y="1.5" width="17" height="15"/><rect x="18.500" y="1.500" width="17" height="15"/><rect x="36.500" y="1.500" width="17" height="15"/><rect x="54.500" y="1.500" width="17" height="15"/></g>
<path d="M17.500 2V16.500H1M35.500 2V16.500H19M53.500 2V16.500H37M71.500 2V16.500H55" stroke="#aca899" fill="none"/>
<path d="M5.500 4.500V12.500" stroke="#000" stroke-width="1.6"/><path d="M12 4V13L7 8.500Z" fill="#000"/>
<path d="M29 4V13L24 8.500Z" fill="#000"/>
<path d="M42 4V13L47 8.500Z" fill="#000"/>
<path d="M66.500 4.500V12.500" stroke="#000" stroke-width="1.6"/><path d="M60 4V13L65 8.500Z" fill="#000"/>
<path d="M76.500 0.500L80.500 15.500H115.500L118.500 0.500" fill="#ece9d8" stroke="#000"/>
<path d="M169.500 0.500L172.500 15.500H216.500L220.500 0.500" fill="#ece9d8" stroke="#000"/>
<path d="M118.500 0L121.500 15.500H165.500L169.500 0" fill="#fff" stroke="#000"/>
<path d="M119.500 0.500H168.500" stroke="#fff"/>
</svg>
<span class="abs" style="left:137.5px;top:870px;font-size:11px;transform-origin:0 0;transform:scaleX(0.958)">Model</span>
<span class="abs" style="left:178.7px;top:870px;font-size:11px;transform-origin:0 0;transform:scaleX(0.925)">Layout1</span>
<span class="abs" style="left:228.7px;top:870px;font-size:11px;transform-origin:0 0;transform:scaleX(0.937)">Layout2</span>
<!-- splitter -->
<div class="abs" style="left:0;top:885px;width:1280px;height:2px;background:#fff"></div>
<div class="abs" style="left:0;top:887px;width:1280px;height:4px;background:#ece9d8"></div>
<div class="abs" style="left:0;top:891px;width:1280px;height:1px;background:#1c1c18"></div>
<div class="abs" style="left:0;top:892px;width:1280px;height:5px;background:#ece9d8"></div>
<!-- command -->
<div class="abs" style="left:6px;top:899px;width:2px;height:62px;background:#fff;border-right:1px solid #b9b5a4"></div>
<div class="abs" style="left:10px;top:899px;width:2px;height:62px;background:#fff;border-right:1px solid #b9b5a4"></div>
<div class="abs" style="left:16px;top:897px;width:1264px;height:67px;background:#fff;border-left:2px solid #000;border-top:1px solid #000"></div>
<div class="abs" style="left:0;top:964px;width:1280px;height:2px;background:#f2f0e6"></div>
<div class="abs" style="left:18px;top:947px;width:1262px;height:1px;background:#8c8a7c"></div>
<pre class="abs" style="left:19px;top:899px;font-family:'Liberation Mono',monospace;font-size:13.330px;line-height:13px">Command:
Command: _erase
Select objects:</pre>
<pre class="abs" style="left:19px;top:952px;font-family:'Liberation Mono',monospace;font-size:13.330px;line-height:13px">Command:</pre>
<!-- status bar -->
<div class="abs" style="left:0;top:966px;width:1280px;height:1px;background:#b4b0a0"></div>
<div class="abs" style="left:0;top:967px;width:1280px;height:1px;background:#fff"></div>
<div class="abs" style="left:0;top:968px;width:1280px;height:22px;background:#ece9d8"></div>
<div class="sunk" style="left:5px;width:238px"><span style="left:1.5px">223.2171, 192.5169, 0.0000</span></div>
<div class="sb up" style="left:248px;width:32px"><span>SNAP</span></div>
<div class="sb up" style="left:284px;width:31px"><span>GRID</span></div>
<div class="sb up" style="left:319px;width:43px"><span>ORTHO</span></div>
<div class="sb dn" style="left:366px;width:42px"><span>POLAR</span></div>
<div class="sb dn" style="left:410px;width:43px"><span>OSNAP</span></div>
<div class="sb dn" style="left:455px;width:50px"><span>OTRACK</span></div>
<div class="sb dn" style="left:507px;width:29px"><span>DYN</span></div>
<div class="sb up" style="left:538px;width:29px"><span>LWT</span></div>
<div class="sb dn" style="left:570px;width:42px"><span>PAPER</span></div>
<div class="abs" style="left:628px;top:971px;width:12px;height:18px;border:1px solid #d8d4c4;background:#f1efe4"></div>
<svg class="abs" style="left:631px;top:976px" width="5" height="8" viewBox="0 0 5 8"><path d="M4.500 0L0.500 4L4.500 8Z" fill="#c0bcac"/></svg>
<svg class="abs" style="left:645px;top:971px" width="19" height="18" viewBox="0 0 19 18"><rect x="0" y="0" width="19" height="18" fill="#e8e6dc"/><path d="M2.500 17V2.500H18" fill="none" stroke="#e01818" stroke-width="1.400" stroke-dasharray="2 1.400"/><rect x="6.500" y="5.500" width="11.500" height="11.500" fill="#f4f8fc" stroke="#1c4a88" stroke-width="1.500"/><rect x="9.500" y="8.500" width="6" height="6" fill="#b8d4f0" stroke="#4c80c0"/><path d="M2.500 2.500L7 7" stroke="#1c4a88" stroke-width="1.600"/><path d="M2 2H6L2 6Z" fill="#1c4a88"/></svg>
<div class="abs" style="left:667px;top:971px;width:12px;height:18px;border:1px solid #d8d4c4;background:#f1efe4"></div>
<svg class="abs" style="left:671px;top:976px" width="5" height="8" viewBox="0 0 5 8"><path d="M0.500 0L4.500 4L0.500 8Z" fill="#c0bcac"/></svg>
<!-- tray -->
<div class="abs" style="left:1220px;top:970px;width:44px;height:20px;border-left:1px solid #aca899;border-top:1px solid #aca899;border-right:1px solid #fff"></div>
<svg class="abs" style="left:1222px;top:971px" width="20" height="18" viewBox="0 0 20 18"><ellipse cx="9" cy="6" rx="6" ry="3.500" fill="#b8c8e0" stroke="#6078a0" transform="rotate(-35 9 6)"/><path d="M6 9L4 15H10Z" fill="#8898b8"/><path d="M13 6L19.500 17.500H6.500Z" fill="#f8d820" stroke="#a08000" stroke-width="0.800"/><path d="M13 10V14M13 15.200V16.500" stroke="#000" stroke-width="1.400"/></svg>
<svg class="abs" style="left:1243px;top:971px" width="18" height="18" viewBox="0 0 18 18"><path d="M9 9V5C9 1 15.500 1 15.500 5V7" stroke="#c8a818" stroke-width="2" fill="none"/><rect x="1.500" y="8.500" width="11" height="8.500" rx="1" fill="#e8c830" stroke="#806800"/><path d="M2 11.500H12M2 14H12" stroke="#806800" stroke-width="0.800"/></svg>
<svg class="abs" style="left:1268px;top:981px" width="9" height="5" viewBox="0 0 9 5"><path d="M0.500 0H8.500L4.500 4.500Z" fill="#000"/></svg>
<div class="abs" style="left:0;top:990px;width:1280px;height:4px;background:linear-gradient(to bottom,#3f86ec,#2f74e2 60%,#2a6cdc)"></div>
<!-- balloon -->
<svg class="abs" style="left:978px;top:880px" width="302" height="104" viewBox="978 880 302 104">
<path d="M996.500 884.500H1261.500Q1275.500 884.500 1275.500 898.500V946.500Q1275.500 960.500 1261.500 960.500H1211.500L1231.500 979.500L1190.500 960.500H996.500Q982.500 960.500 982.500 946.500V898.500Q982.500 884.500 996.500 884.500Z" fill="#ffffe1" stroke="#000" stroke-width="1"/>
<circle cx="999.500" cy="900" r="7" fill="#fff" stroke="#7090d0" stroke-width="1.200"/><path d="M996 905L994.500 909L1000 906.500Z" fill="#fff" stroke="#7090d0" stroke-width="0.800"/><circle cx="999.500" cy="900" r="5.500" fill="#e8f0ff"/><path d="M999.700 899V904M997.800 899H999.700M997.800 904H1001.500" stroke="#1838a8" stroke-width="1.600" fill="none"/><circle cx="999.500" cy="896" r="1.200" fill="#1838a8"/>
<rect x="1252.500" y="894.500" width="14" height="14" fill="#ffffe1" stroke="#aca899"/><path d="M1256 898L1263 905M1263 898L1256 905" stroke="#000" stroke-width="2"/>
</svg>
<span class="abs" id="bt" style="left:1018px;top:894px;font-size:11.5px;transform-origin:0 0;transform:scaleX(0.99);font-weight:bold;white-space:nowrap">Communication Center</span>
<span class="abs" id="bb" style="left:998.5px;top:917px;font-size:11px;transform-origin:0 0;transform:scaleX(0.965);white-space:nowrap">The easy way to keep you and your software up-to-date.</span>
<span class="abs" id="bl" style="left:998.5px;top:936px;font-size:11px;transform-origin:0 0;transform:scaleX(0.94);white-space:nowrap;color:#0000ff;text-decoration:underline">Click here.</span>
</div></body></html>
